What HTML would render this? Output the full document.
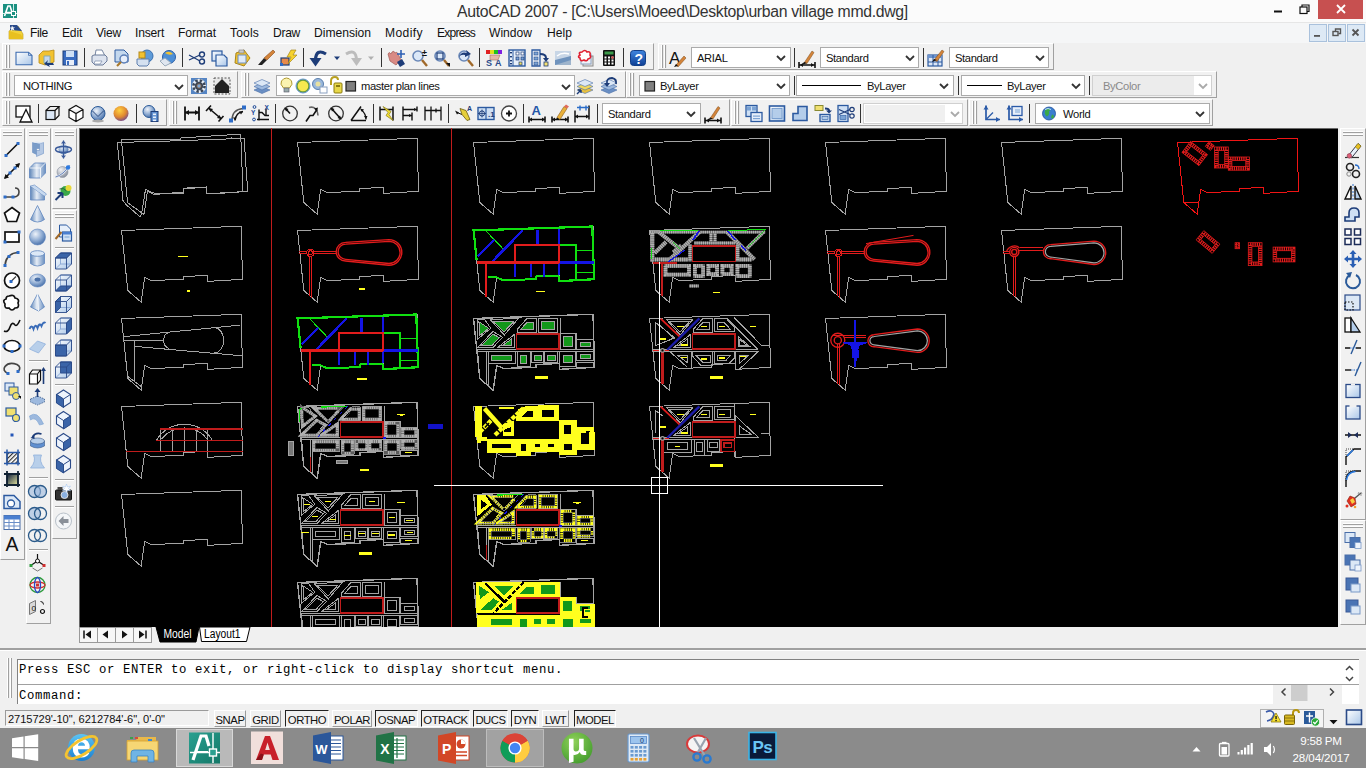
<!DOCTYPE html>
<html lang="en"><head><meta charset="utf-8"><title>AutoCAD 2007 - urban village mmd.dwg</title>
<style>

html,body{margin:0;padding:0}
body{width:1366px;height:768px;overflow:hidden;position:relative;background:#f0f0f0;font-family:"Liberation Sans",sans-serif;font-size:12px;color:#000}
.abs{position:absolute}
#title{position:absolute;left:0;top:0;width:1366px;height:22px;background:#fbfbfb}
#title .t{position:absolute;left:457px;top:2.5px;width:452px;font-size:15.8px;line-height:18px;white-space:nowrap;color:#333;letter-spacing:-0.34px}
#close{position:absolute;left:1318px;top:0;width:45px;height:19px;background:#c75050}
#menu{position:absolute;left:0;top:22px;width:1366px;height:21px;background:#f5f6f7;border-top:1px solid #e6e6e6;box-sizing:border-box}
#menu span{position:absolute;top:2px;font-size:12.1px;line-height:16px;white-space:nowrap;color:#111}
.mdi{position:absolute;top:24px;width:16px;height:16px;background:#dde9f5;border:1px solid #a9c1dc;box-sizing:content-box}
.tb{position:absolute;height:25px;background:#f1f1f1;border:1px solid;border-color:#fff #a0a0a0 #a0a0a0 #fff}
.grip{position:absolute;top:1px;width:1px;height:23px;background:#fff;border-right:1px solid #a0a0a0;box-shadow:1px 0 0 #e8e8e8}
.cb{position:absolute;height:19px;background:#fff;border:1px solid #ababab;box-sizing:content-box;font-size:11.2px;letter-spacing:-0.35px;line-height:20px;white-space:nowrap;overflow:hidden;color:#111}
.cb.dis{color:#8a8a8a;border-color:#d0d0d0}
.cb span{position:absolute;top:0}
.sep{position:absolute;width:1px;height:19px;background:#333}
.vtb{position:absolute;background:#f1f1f1;border:1px solid;border-color:#fff #a0a0a0 #a0a0a0 #fff}
.hgrip{position:absolute;left:2px;right:2px;height:1px;background:#fff;border-bottom:1px solid #a0a0a0}
.hsep{position:absolute;left:3px;right:3px;height:1px;background:#a0a0a0;border-bottom:1px solid #fff}
#dwg{position:absolute;left:79px;top:128px;width:1259px;height:499px;background:#000;border-top:1px solid #696969;border-left:1px solid #696969;box-sizing:border-box}
#tabs{position:absolute;left:80px;top:627px;height:15px}
.nav{position:absolute;top:627px;width:17px;height:14px;background:#f6f6f6;border:1px solid #9a9a9a;box-sizing:content-box}
#cmdsepline{position:absolute;left:0;top:648px;width:1366px;height:2px;background:#a0a0a0;border-bottom:1px solid #fff}
#cmd{position:absolute;left:17px;top:659px;width:1341px;height:44px;background:#fff;border-left:1px solid #828282;border-top:1px solid #828282;box-sizing:content-box}
#cmd .l{position:absolute;left:1px;font-family:"Liberation Mono",monospace;font-size:12.3px;line-height:14px;white-space:pre;color:#000;letter-spacing:0.62px}
#status{position:absolute;left:0;top:706px;width:1366px;height:22px;background:#f0f0f0}
.sb{position:absolute;top:710px;height:17px;font-size:11.3px;line-height:18px;text-align:center;white-space:nowrap;box-sizing:border-box;color:#111;letter-spacing:-0.45px}
.sb.up{border:1px solid;border-color:#fff #9a9a9a #9a9a9a #fff}
.sb.dn{border:1px solid;border-color:#222 #fff #fff #222}
#coords{position:absolute;left:5px;top:710px;width:204px;height:16px;border:1px solid;border-color:#9a9a9a #fff #fff #9a9a9a;font-size:11.1px;line-height:17px;white-space:nowrap;box-sizing:border-box;color:#111;letter-spacing:-0.06px}
#taskbar{position:absolute;left:0;top:728px;width:1366px;height:40px;background:#8b8b8b}
.tray{position:absolute;color:#fff;font-size:12px;white-space:nowrap;text-align:center}

</style></head>
<body>
<div id="title"><div class="t">AutoCAD 2007 - [C:\Users\Moeed\Desktop\urban village mmd.dwg]</div><div id="close"></div></div>
<div id="menu"><span style="left:30px;letter-spacing:-0.38px">File</span><span style="left:62px;letter-spacing:-0.20px">Edit</span><span style="left:96px;letter-spacing:-0.25px">View</span><span style="left:135px;letter-spacing:-0.20px">Insert</span><span style="left:178px;letter-spacing:-0.05px">Format</span><span style="left:230px;letter-spacing:0.16px">Tools</span><span style="left:273px;letter-spacing:-0.30px">Draw</span><span style="left:314px;letter-spacing:-0.01px">Dimension</span><span style="left:385px;letter-spacing:0.40px">Modify</span><span style="left:437px;letter-spacing:-0.81px">Express</span><span style="left:489px;letter-spacing:0.00px">Window</span><span style="left:547px;letter-spacing:0.03px">Help</span></div>
<div class="mdi" style="left:1309px"></div>
<div class="mdi" style="left:1328px"></div>
<div class="mdi" style="left:1347px"></div>
<div class="tb" style="left:2px;top:43px;width:650px"><i class="grip" style="left:2px"></i><i class="grip" style="left:5px"></i></div>
<div class="tb" style="left:658px;top:43px;width:394px"><i class="grip" style="left:2px"></i><i class="grip" style="left:5px"></i></div>
<div class="tb" style="left:2px;top:71px;width:234px"><i class="grip" style="left:2px"></i><i class="grip" style="left:5px"></i></div>
<div class="tb" style="left:241px;top:71px;width:383px"><i class="grip" style="left:2px"></i><i class="grip" style="left:5px"></i></div>
<div class="tb" style="left:626px;top:71px;width:589px"><i class="grip" style="left:2px"></i><i class="grip" style="left:5px"></i></div>
<div class="tb" style="left:2px;top:99px;width:163px"><i class="grip" style="left:2px"></i><i class="grip" style="left:5px"></i></div>
<div class="tb" style="left:169px;top:99px;width:559px"><i class="grip" style="left:2px"></i><i class="grip" style="left:5px"></i></div>
<div class="tb" style="left:731px;top:99px;width:235px"><i class="grip" style="left:2px"></i><i class="grip" style="left:5px"></i></div>
<div class="tb" style="left:969px;top:99px;width:242px"><i class="grip" style="left:2px"></i><i class="grip" style="left:5px"></i></div>
<i class="sep" style="left:84px;top:48px"></i>
<i class="sep" style="left:182px;top:48px"></i>
<i class="sep" style="left:303px;top:48px"></i>
<i class="sep" style="left:381px;top:48px"></i>
<i class="sep" style="left:479px;top:48px"></i>
<i class="sep" style="left:623px;top:48px"></i>
<i class="sep" style="left:794px;top:48px"></i>
<i class="sep" style="left:923px;top:48px"></i>
<i class="sep" style="left:794px;top:76px"></i>
<i class="sep" style="left:958px;top:76px"></i>
<i class="sep" style="left:1089px;top:76px"></i>
<i class="sep" style="left:38px;top:104px"></i>
<i class="sep" style="left:136px;top:104px"></i>
<i class="sep" style="left:275px;top:104px"></i>
<i class="sep" style="left:373px;top:104px"></i>
<i class="sep" style="left:448px;top:104px"></i>
<i class="sep" style="left:523px;top:104px"></i>
<i class="sep" style="left:597px;top:104px"></i>
<i class="sep" style="left:860px;top:104px"></i>
<i class="sep" style="left:1029px;top:104px"></i>
<div class="cb" style="left:691px;top:47px;width:98px"><span style="left:5px">ARIAL</span></div>
<div class="cb" style="left:820px;top:47px;width:97px"><span style="left:5px">Standard</span></div>
<div class="cb" style="left:949px;top:47px;width:98px"><span style="left:5px">Standard</span></div>
<div class="cb" style="left:14px;top:75px;width:172px"><span style="left:8px">NOTHING</span></div>
<div class="cb" style="left:276px;top:75px;width:297px"><span style="left:84px">master plan lines</span></div>
<div class="cb" style="left:639px;top:75px;width:149px"><span style="left:20px">ByLayer</span></div>
<div class="cb" style="left:796px;top:75px;width:156px"><span style="left:70px">ByLayer</span><i class="abs" style="left:5px;top:9px;width:59px;height:1px;background:#000"></i></div>
<div class="cb" style="left:961px;top:75px;width:122px"><span style="left:45px">ByLayer</span><i class="abs" style="left:5px;top:9px;width:35px;height:1px;background:#000"></i></div>
<div class="cb dis" style="background:linear-gradient(90deg,#ececec 0,#ececec 101px,#fff 101px);left:1092px;top:75px;width:118px"><span style="left:10px">ByColor</span></div>
<div class="cb" style="left:602px;top:103px;width:97px"><span style="left:5px">Standard</span></div>
<div class="cb dis" style="left:863px;top:103px;width:98px"><span style="left:5px"></span><i class="abs" style="left:1px;top:1px;width:80px;height:17px;background:#f0f0f0"></i></div>
<div class="cb" style="left:1035px;top:103px;width:173px"><span style="left:27px">World</span></div>
<div class="vtb" style="left:0px;top:128px;width:23px;height:430px"><i class="hgrip" style="top:2px"></i><i class="hgrip" style="top:5px"></i></div>
<div class="vtb" style="left:26px;top:128px;width:23px;height:494px"><i class="hgrip" style="top:2px"></i><i class="hgrip" style="top:5px"></i></div>
<div class="vtb" style="left:52px;top:128px;width:23px;height:79px"><i class="hgrip" style="top:2px"></i><i class="hgrip" style="top:5px"></i></div>
<div class="vtb" style="left:52px;top:210px;width:23px;height:327px"><i class="hgrip" style="top:2px"></i><i class="hgrip" style="top:5px"></i></div>
<i class="abs" style="left:29px;top:360px;width:19px;height:1px;background:#a0a0a0;box-shadow:0 1px 0 #fff"></i>
<i class="abs" style="left:29px;top:477px;width:19px;height:1px;background:#a0a0a0;box-shadow:0 1px 0 #fff"></i>
<i class="abs" style="left:29px;top:549px;width:19px;height:1px;background:#a0a0a0;box-shadow:0 1px 0 #fff"></i>
<i class="abs" style="left:55px;top:247px;width:19px;height:1px;background:#a0a0a0;box-shadow:0 1px 0 #fff"></i>
<i class="abs" style="left:55px;top:383.5px;width:19px;height:1px;background:#a0a0a0;box-shadow:0 1px 0 #fff"></i>
<i class="abs" style="left:55px;top:478.5px;width:19px;height:1px;background:#a0a0a0;box-shadow:0 1px 0 #fff"></i>
<i class="abs" style="left:55px;top:506px;width:19px;height:1px;background:#a0a0a0;box-shadow:0 1px 0 #fff"></i>
<div class="vtb" style="left:1340px;top:128px;width:24px;height:390px"><i class="hgrip" style="top:2px"></i><i class="hgrip" style="top:5px"></i></div>
<div class="vtb" style="left:1340px;top:520px;width:24px;height:103px"><i class="hgrip" style="top:2px"></i><i class="hgrip" style="top:5px"></i></div>
<div id="dwg"></div>
<div class="nav" style="left:79px"></div>
<div class="nav" style="left:97px"></div>
<div class="nav" style="left:115px"></div>
<div class="nav" style="left:133px"></div>
<div id="cmdsepline"></div>
<div id="cmd"><div class="l" style="top:3px">Press ESC or ENTER to exit, or right-click to display shortcut menu.</div><i class="abs" style="left:0;top:24px;width:1341px;height:1px;background:#a0a0a0"></i><i class="abs" style="left:1255px;top:25px;width:69px;height:19px;background:#f0f0f0"></i><div class="l" style="top:28.5px">Command:</div></div>
<div id="status"></div>
<div id="coords"><span style="position:absolute;left:2px;top:0">2715729'-10", 6212784'-6", 0'-0"</span></div>
<div class="sb up" style="left:214px;width:32px">SNAP</div>
<div class="sb up" style="left:250px;width:31px">GRID</div>
<div class="sb dn" style="left:285px;width:44px">ORTHO</div>
<div class="sb up" style="left:332px;width:40px">POLAR</div>
<div class="sb dn" style="left:375px;width:43px">OSNAP</div>
<div class="sb dn" style="left:421px;width:49px">OTRACK</div>
<div class="sb dn" style="left:473px;width:35px">DUCS</div>
<div class="sb dn" style="left:511px;width:28px">DYN</div>
<div class="sb up" style="left:542px;width:27px">LWT</div>
<div class="sb dn" style="left:574px;width:42px">MODEL</div>
<svg class="abs" style="left:80px;top:128px" width="1258" height="499" viewBox="80 128 1258 499" shape-rendering="crispEdges"><defs><pattern id="hatchv" width="1.7" height="60" patternUnits="userSpaceOnUse"><rect x="0" y="0" width="0.7" height="60" fill="#000" fill-opacity="0.75"/></pattern></defs><line x1="271.5" y1="128" x2="271.5" y2="627" stroke="#c01c1c" stroke-width="1" /><line x1="451.5" y1="128" x2="451.5" y2="627" stroke="#c01c1c" stroke-width="1" /><g transform="translate(297,138)"><polygon points="0.5,4.5 120,0.3 121.6,53.3 86.3,55.4 86.3,49.5 62.8,50.5 62.8,53.3 30.5,54.5 23.7,51.5 20.2,76.2 6.8,64.5" fill="none" stroke="#a4a4a4" stroke-width="1" /></g><g transform="translate(473,138)"><polygon points="0.5,4.5 120,0.3 121.6,53.3 86.3,55.4 86.3,49.5 62.8,50.5 62.8,53.3 30.5,54.5 23.7,51.5 20.2,76.2 6.8,64.5" fill="none" stroke="#a4a4a4" stroke-width="1" /></g><g transform="translate(649,138)"><polygon points="0.5,4.5 120,0.3 121.6,53.3 86.3,55.4 86.3,49.5 62.8,50.5 62.8,53.3 30.5,54.5 23.7,51.5 20.2,76.2 6.8,64.5" fill="none" stroke="#a4a4a4" stroke-width="1" /></g><g transform="translate(825,138)"><polygon points="0.5,4.5 120,0.3 121.6,53.3 86.3,55.4 86.3,49.5 62.8,50.5 62.8,53.3 30.5,54.5 23.7,51.5 20.2,76.2 6.8,64.5" fill="none" stroke="#a4a4a4" stroke-width="1" /></g><g transform="translate(1001,138)"><polygon points="0.5,4.5 120,0.3 121.6,53.3 86.3,55.4 86.3,49.5 62.8,50.5 62.8,53.3 30.5,54.5 23.7,51.5 20.2,76.2 6.8,64.5" fill="none" stroke="#a4a4a4" stroke-width="1" /></g><polygon points="121.4,139.4 180.9,139.1 180.9,138 240.7,134.1 243,191.5 214.9,193.9 206.1,193.9 206.1,187.4 183.8,188.6 183.8,193.3 153.4,194.2 147.5,190.9 144,214.4 127.6,202.7" fill="none" stroke="#a4a4a4" stroke-width="1" /><polygon points="117.3,142.3 151,141.7 231.3,138.8 231.3,138 244.2,138.2 244.8,148.7 247.7,191.5 214.9,193.3 206.1,193.3 206.1,187 195.5,187.4 183.8,188.2 183.8,192.6 155,193.6 145.5,189.5 141.5,214.5 139.9,216.7 126.4,205 122.9,200.3" fill="none" stroke="#a4a4a4" stroke-width="1" /><g transform="translate(121,226)"><polygon points="0.5,4.5 120,0.3 121.6,53.3 86.3,55.4 86.3,49.5 62.8,50.5 62.8,53.3 30.5,54.5 23.7,51.5 20.2,76.2 6.8,64.5" fill="none" stroke="#a4a4a4" stroke-width="1" /><rect x="57" y="29.5" width="10" height="1.3" fill="#ffff1e" stroke="none" stroke-width="1" /><rect x="66" y="64" width="3" height="2" fill="#ffff1e" stroke="none" stroke-width="1" /></g><g transform="translate(121,314)"><polygon points="0.5,4.5 120,0.3 121.6,53.3 86.3,55.4 86.3,49.5 62.8,50.5 62.8,53.3 30.5,54.5 23.7,51.5 20.2,76.2 6.8,64.5" fill="none" stroke="#a4a4a4" stroke-width="1" /><line x1="1.7" y1="22.7" x2="119.4" y2="11.1" stroke="#a4a4a4" stroke-width="1" /><line x1="13.6" y1="32.4" x2="121.4" y2="41.8" stroke="#a4a4a4" stroke-width="1" /><line x1="2.5" y1="26.6" x2="41.7" y2="26.6" stroke="#a4a4a4" stroke-width="1" /><line x1="13.6" y1="26.6" x2="13.6" y2="67" stroke="#a4a4a4" stroke-width="1" /><line x1="6.6" y1="62.3" x2="20.6" y2="72.9" stroke="#a4a4a4" stroke-width="1" /><path d="M48,18.2 A7.6,8.6 0 0 0 48,34.6" fill="none" stroke="#a4a4a4"/><path d="M93.3,13.7 A9.4,12.6 0 0 1 93.3,38.9" fill="none" stroke="#a4a4a4"/></g><g transform="translate(121,402)"><polygon points="0.5,4.5 120,0.3 121.6,53.3 86.3,55.4 86.3,49.5 62.8,50.5 62.8,53.3 30.5,54.5 23.7,51.5 20.2,76.2 6.8,64.5" fill="none" stroke="#a4a4a4" stroke-width="1" /><line x1="39.4" y1="26.8" x2="39.4" y2="49.4" stroke="#a4a4a4" stroke-width="1" /><line x1="51.7" y1="26.8" x2="51.7" y2="49.4" stroke="#a4a4a4" stroke-width="1" /><line x1="63.4" y1="26.8" x2="63.4" y2="49.4" stroke="#a4a4a4" stroke-width="1" /><line x1="75.1" y1="26.8" x2="75.1" y2="49.4" stroke="#a4a4a4" stroke-width="1" /><line x1="86.3" y1="26.8" x2="86.3" y2="49.4" stroke="#a4a4a4" stroke-width="1" /><path d="M35.3,38.6 A32.3,32.3 0 0 1 91.5,38.6" fill="none" stroke="#a4a4a4"/><path d="M40.6,37.1 A29,29 0 0 1 86.3,37.1" fill="none" stroke="#a4a4a4"/><line x1="39.4" y1="26.8" x2="122" y2="26.8" stroke="#c01c1c" stroke-width="1.4" /><line x1="35.3" y1="38.6" x2="122" y2="38.6" stroke="#c01c1c" stroke-width="1.4" /><line x1="5.4" y1="49.4" x2="122" y2="49.4" stroke="#c01c1c" stroke-width="1.4" /></g><g transform="translate(121,490)"><polygon points="0.5,4.5 120,0.3 121.6,53.3 86.3,55.4 86.3,49.5 62.8,50.5 62.8,53.3 30.5,54.5 23.7,51.5 20.2,76.2 6.8,64.5" fill="none" stroke="#a4a4a4" stroke-width="1" /></g><g transform="translate(297,226)"><polygon points="0.5,4.5 120,0.3 121.6,53.3 86.3,55.4 86.3,49.5 62.8,50.5 62.8,53.3 30.5,54.5 23.7,51.5 20.2,76.2 6.8,64.5" fill="none" stroke="#a4a4a4" stroke-width="1" /><line x1="2.2" y1="25.9" x2="41.5" y2="25.9" stroke="#e21c1c" stroke-width="1" /><line x1="2.2" y1="27.7" x2="41.5" y2="27.7" stroke="#e21c1c" stroke-width="1" /><circle cx="13.4" cy="26.8" r="3.6" fill="#000" stroke="#e21c1c"/><circle cx="13.4" cy="26.8" r="2" fill="none" stroke="#e21c1c"/><line x1="12.4" y1="30" x2="12.4" y2="70" stroke="#e21c1c" stroke-width="1" /><line x1="14.3" y1="30" x2="14.3" y2="71.5" stroke="#e21c1c" stroke-width="1" /><path d="M48.5,16.4 L92,13.6 A12.8,12.8 0 0 1 92,39.2 L48.5,35 A9.3,9.3 0 0 1 48.5,16.4Z" fill="#000" stroke="#e21c1c" stroke-width="1.35" shape-rendering="auto"/><path d="M48.7,18.1 L92,15.3 A11.1,11.1 0 0 1 92,37.5 L48.7,33.3 A7.6,7.6 0 0 1 48.7,18.1Z" fill="none" stroke="#e21c1c" stroke-width="1.35" shape-rendering="auto"/><rect x="62" y="62" width="6" height="1.5" fill="#ffff1e" stroke="none" stroke-width="1" /></g><g transform="translate(297,314)"><polygon points="0.5,4.5 120,0.3 121.6,53.3 86.3,55.4 86.3,49.5 62.8,50.5 62.8,53.3 30.5,54.5 23.7,51.5 20.2,76.2 6.8,64.5" fill="none" stroke="#a4a4a4" stroke-width="1" /><polyline points="3.6,33.8 0.6,4.4 119.3,0.5 121.1,53.2 86,55.2 86,49.5" fill="none" stroke="#10e010" stroke-width="2.2" /><polyline points="14.8,50.7 23.7,51.5 30.5,54.3 62.8,53.1 62.8,50.5 86,49.5" fill="none" stroke="#10e010" stroke-width="2" /><line x1="12.3" y1="4.4" x2="31" y2="23.8" stroke="#10e010" stroke-width="1" /><polyline points="85.7,19.4 103.2,19.4 103.2,53.2" fill="none" stroke="#10e010" stroke-width="2" /><line x1="103.2" y1="24.6" x2="120" y2="24.6" stroke="#10e010" stroke-width="1.4" /><line x1="103.2" y1="46.7" x2="121" y2="46.7" stroke="#10e010" stroke-width="1.4" /><line x1="49.7" y1="4.4" x2="19.8" y2="35" stroke="#1414e6" stroke-width="2.4" /><line x1="21" y1="13.9" x2="4.9" y2="30" stroke="#1414e6" stroke-width="2.4" /><line x1="64.6" y1="4.4" x2="64.6" y2="19.4" stroke="#1414e6" stroke-width="2.4" /><line x1="85.7" y1="2.7" x2="85.7" y2="19.4" stroke="#1414e6" stroke-width="2.2" /><line x1="42.2" y1="36.3" x2="42.2" y2="51.2" stroke="#1414e6" stroke-width="2.4" /><line x1="57.9" y1="36.3" x2="57.9" y2="51.2" stroke="#1414e6" stroke-width="2.4" /><line x1="70.8" y1="36.3" x2="70.8" y2="51.2" stroke="#1414e6" stroke-width="2.4" /><line x1="85.7" y1="36.3" x2="85.7" y2="49" stroke="#1414e6" stroke-width="2.2" /><line x1="85.7" y1="36.3" x2="121" y2="36.3" stroke="#1414e6" stroke-width="2.4" /><line x1="3.6" y1="36.3" x2="85.7" y2="36.3" stroke="#e21c1c" stroke-width="2.6" /><rect x="42.2" y="19.4" width="43.5" height="16.9" fill="none" stroke="#e21c1c" stroke-width="2" /><line x1="13.1" y1="36.3" x2="13.1" y2="71.1" stroke="#e21c1c" stroke-width="2.4" /><rect x="60" y="64" width="10" height="1.6" fill="#ffff1e" stroke="none" stroke-width="1" /></g><g transform="translate(297,402)"><polygon points="0.5,4.5 120,0.3 121.6,53.3 86.3,55.4 86.3,49.5 62.8,50.5 62.8,53.3 30.5,54.5 23.7,51.5 20.2,76.2 6.8,64.5" fill="none" stroke="#a4a4a4" stroke-width="1.4" /><polyline points="87.3,4.4 87.3,19 103,19 103,25.2 120.5,25.2" fill="none" stroke="#a4a4a4" stroke-width="1" /><polyline points="4.7,37.8 6.8,64.5" fill="none" stroke="#a4a4a4" stroke-width="1" /><line x1="13.5" y1="37.8" x2="13.5" y2="69" stroke="#a4a4a4" stroke-width="1" /><line x1="15.3" y1="49.8" x2="15.3" y2="72" stroke="#a4a4a4" stroke-width="1" /><line x1="3.5" y1="35.6" x2="120.7" y2="35.6" stroke="#a4a4a4" stroke-width="1" /><line x1="3.5" y1="37.6" x2="120.7" y2="37.6" stroke="#a4a4a4" stroke-width="1" /><polygon points="5.9,7.7 15.8,14.3 6.8,21.4" fill="none" stroke="#5c5c5c" stroke-width="6" stroke-linejoin="miter"/><polygon points="5.9,7.7 15.8,14.3 6.8,21.4" fill="none" stroke="#b0b0b0" stroke-width="6" stroke-dasharray="1.5 0.7" stroke-linejoin="miter" shape-rendering="geometricPrecision"/><polygon points="5.9,7.7 15.8,14.3 6.8,21.4" fill="#000" stroke="#555" stroke-width="0.6" /><polygon points="4.3,5.5 11.5,5.3 17.8,14.3 4.8,25" fill="none" stroke="#a4a4a4" stroke-width="0.8" /><polygon points="21.1,7.9 40.4,7.9 31.1,17.8" fill="none" stroke="#5c5c5c" stroke-width="6" stroke-linejoin="miter"/><polygon points="21.1,7.9 40.4,7.9 31.1,17.8" fill="none" stroke="#b0b0b0" stroke-width="6" stroke-dasharray="1.5 0.7" stroke-linejoin="miter" shape-rendering="geometricPrecision"/><polygon points="21.1,7.9 40.4,7.9 31.1,17.8" fill="#000" stroke="#555" stroke-width="0.6" /><polygon points="17,5.2 45,4.8 31.3,21" fill="none" stroke="#a4a4a4" stroke-width="0.8" /><polygon points="8.2,31.5 20,20.2 26.2,23.5 19,31.5" fill="none" stroke="#5c5c5c" stroke-width="6" stroke-linejoin="miter"/><polygon points="8.2,31.5 20,20.2 26.2,23.5 19,31.5" fill="none" stroke="#b0b0b0" stroke-width="6" stroke-dasharray="1.5 0.7" stroke-linejoin="miter" shape-rendering="geometricPrecision"/><polygon points="8.2,31.5 20,20.2 26.2,23.5 19,31.5" fill="#000" stroke="#555" stroke-width="0.6" /><polygon points="4.6,33.5 20,17.5 29.5,23.3 20,33.5" fill="none" stroke="#a4a4a4" stroke-width="0.8" /><polygon points="29.3,31.5 38.7,24.9 38.7,31.5" fill="none" stroke="#5c5c5c" stroke-width="6" stroke-linejoin="miter"/><polygon points="29.3,31.5 38.7,24.9 38.7,31.5" fill="none" stroke="#b0b0b0" stroke-width="6" stroke-dasharray="1.5 0.7" stroke-linejoin="miter" shape-rendering="geometricPrecision"/><polygon points="29.3,31.5 38.7,24.9 38.7,31.5" fill="#000" stroke="#555" stroke-width="0.6" /><polygon points="24.5,33.5 41.3,20.5 41.3,33.5" fill="none" stroke="#a4a4a4" stroke-width="0.8" /><polygon points="47.5,15.5 53.9,8.5 60.7,8.5 60.7,15.5" fill="none" stroke="#5c5c5c" stroke-width="6" stroke-linejoin="miter"/><polygon points="47.5,15.5 53.9,8.5 60.7,8.5 60.7,15.5" fill="none" stroke="#b0b0b0" stroke-width="6" stroke-dasharray="1.5 0.7" stroke-linejoin="miter" shape-rendering="geometricPrecision"/><polygon points="47.5,15.5 53.9,8.5 60.7,8.5 60.7,15.5" fill="#000" stroke="#555" stroke-width="0.6" /><polygon points="44.5,18 44.5,15 53.5,5 63,4.8 63,18" fill="none" stroke="#a4a4a4" stroke-width="0.8" /><polygon points="68.2,7.3 81.7,7.3 81.7,15.9 68.2,15.9" fill="none" stroke="#5c5c5c" stroke-width="6" stroke-linejoin="miter"/><polygon points="68.2,7.3 81.7,7.3 81.7,15.9 68.2,15.9" fill="none" stroke="#b0b0b0" stroke-width="6" stroke-dasharray="1.5 0.7" stroke-linejoin="miter" shape-rendering="geometricPrecision"/><polygon points="68.2,7.3 81.7,7.3 81.7,15.9 68.2,15.9" fill="#000" stroke="#555" stroke-width="0.6" /><polygon points="65.5,4.7 84.5,4.3 84.5,18 65.5,18" fill="none" stroke="#a4a4a4" stroke-width="0.8" /><polygon points="90.2,22.5 99,22.5 99,32.7 90.2,32.7" fill="none" stroke="#5c5c5c" stroke-width="6" stroke-linejoin="miter"/><polygon points="90.2,22.5 99,22.5 99,32.7 90.2,32.7" fill="none" stroke="#b0b0b0" stroke-width="6" stroke-dasharray="1.5 0.7" stroke-linejoin="miter" shape-rendering="geometricPrecision"/><polygon points="90.2,22.5 99,22.5 99,32.7 90.2,32.7" fill="#000" stroke="#555" stroke-width="0.6" /><polygon points="87.3,19 102.5,19 102.5,35.4 87.3,35.4" fill="none" stroke="#a4a4a4" stroke-width="0.8" /><polygon points="107.2,28.4 117.4,28.4 117.4,32.7 107.2,32.7" fill="none" stroke="#5c5c5c" stroke-width="6" stroke-linejoin="miter"/><polygon points="107.2,28.4 117.4,28.4 117.4,32.7 107.2,32.7" fill="none" stroke="#b0b0b0" stroke-width="6" stroke-dasharray="1.5 0.7" stroke-linejoin="miter" shape-rendering="geometricPrecision"/><polygon points="107.2,28.4 117.4,28.4 117.4,32.7 107.2,32.7" fill="#000" stroke="#555" stroke-width="0.6" /><polygon points="103.7,25.7 120.1,25.7 120.1,35.4 103.7,35.4" fill="none" stroke="#a4a4a4" stroke-width="0.8" /><polygon points="18.2,41.3 38.9,41.3 38.9,46.5 18.2,46.5" fill="none" stroke="#5c5c5c" stroke-width="6" stroke-linejoin="miter"/><polygon points="18.2,41.3 38.9,41.3 38.9,46.5 18.2,46.5" fill="none" stroke="#b0b0b0" stroke-width="6" stroke-dasharray="1.5 0.7" stroke-linejoin="miter" shape-rendering="geometricPrecision"/><polygon points="18.2,41.3 38.9,41.3 38.9,46.5 18.2,46.5" fill="#000" stroke="#555" stroke-width="0.6" /><polygon points="15.3,37.8 42.8,37.8 42.8,49.8 15.3,49.8" fill="none" stroke="#a4a4a4" stroke-width="0.8" /><polygon points="47.1,41.3 53.9,41.3 53.9,49.5 47.1,49.5" fill="none" stroke="#5c5c5c" stroke-width="6" stroke-linejoin="miter"/><polygon points="47.1,41.3 53.9,41.3 53.9,49.5 47.1,49.5" fill="none" stroke="#b0b0b0" stroke-width="6" stroke-dasharray="1.5 0.7" stroke-linejoin="miter" shape-rendering="geometricPrecision"/><polygon points="47.1,41.3 53.9,41.3 53.9,49.5 47.1,49.5" fill="#000" stroke="#555" stroke-width="0.6" /><polygon points="44.5,37.8 57.1,37.8 57.1,52.4 44.5,52.4" fill="none" stroke="#a4a4a4" stroke-width="0.8" /><polygon points="61.2,41 68,41 68,46 61.2,46" fill="none" stroke="#5c5c5c" stroke-width="6" stroke-linejoin="miter"/><polygon points="61.2,41 68,41 68,46 61.2,46" fill="none" stroke="#b0b0b0" stroke-width="6" stroke-dasharray="1.5 0.7" stroke-linejoin="miter" shape-rendering="geometricPrecision"/><polygon points="61.2,41 68,41 68,46 61.2,46" fill="#000" stroke="#555" stroke-width="0.6" /><polygon points="58.6,37.8 70.3,37.8 70.3,48.9 58.6,48.9" fill="none" stroke="#a4a4a4" stroke-width="0.8" /><polygon points="74.4,41 82,41 82,46 74.4,46" fill="none" stroke="#5c5c5c" stroke-width="6" stroke-linejoin="miter"/><polygon points="74.4,41 82,41 82,46 74.4,46" fill="none" stroke="#b0b0b0" stroke-width="6" stroke-dasharray="1.5 0.7" stroke-linejoin="miter" shape-rendering="geometricPrecision"/><polygon points="74.4,41 82,41 82,46 74.4,46" fill="#000" stroke="#555" stroke-width="0.6" /><polygon points="71.7,37.8 84.4,37.8 84.4,48.9 71.7,48.9" fill="none" stroke="#a4a4a4" stroke-width="0.8" /><polygon points="90.2,41.3 99.6,41.3 99.6,48.9 90.2,48.9" fill="none" stroke="#5c5c5c" stroke-width="6" stroke-linejoin="miter"/><polygon points="90.2,41.3 99.6,41.3 99.6,48.9 90.2,48.9" fill="none" stroke="#b0b0b0" stroke-width="6" stroke-dasharray="1.5 0.7" stroke-linejoin="miter" shape-rendering="geometricPrecision"/><polygon points="90.2,41.3 99.6,41.3 99.6,48.9 90.2,48.9" fill="#000" stroke="#555" stroke-width="0.6" /><polygon points="86.7,37.8 102.5,37.8 102.5,52 86.7,52" fill="none" stroke="#a4a4a4" stroke-width="0.8" /><polygon points="107.2,40.7 117.8,40.7 117.8,44.8 107.2,44.8" fill="none" stroke="#5c5c5c" stroke-width="6" stroke-linejoin="miter"/><polygon points="107.2,40.7 117.8,40.7 117.8,44.8 107.2,44.8" fill="none" stroke="#b0b0b0" stroke-width="6" stroke-dasharray="1.5 0.7" stroke-linejoin="miter" shape-rendering="geometricPrecision"/><polygon points="107.2,40.7 117.8,40.7 117.8,44.8 107.2,44.8" fill="#000" stroke="#555" stroke-width="0.6" /><polygon points="103.7,37.8 120.7,37.8 120.7,46.5 103.7,46.5" fill="none" stroke="#a4a4a4" stroke-width="0.8" /><rect x="43.4" y="20.2" width="42.7" height="15" fill="#000" stroke="#c01c1c" stroke-width="1.6" /><polygon points="103.1,48 120.7,48 120.7,53.6 103.1,53.6" fill="none" stroke="#a4a4a4" stroke-width="1" /><rect x="100" y="11.8" width="8" height="1" fill="#ffff1e" stroke="none" stroke-width="1" /><rect x="102.5" y="12.8" width="3" height="1.5" fill="#ffff1e" stroke="none" stroke-width="1" /><rect x="108" y="50.4" width="7" height="0.9" fill="#ffff1e" stroke="none" stroke-width="1" /><line x1="24" y1="5" x2="50" y2="4.6" stroke="#10e010" stroke-width="1.2" /><line x1="50.4" y1="4.4" x2="20.5" y2="35.4" stroke="#1414e6" stroke-width="1" stroke-dasharray="3 5"/><line x1="13.5" y1="55" x2="13.5" y2="70" stroke="#c01c1c" stroke-width="1.2" /><rect x="86" y="35" width="3" height="2" fill="#1414e6" stroke="none" stroke-width="1" /><polyline points="3,20 2,8 5,6" fill="none" stroke="#10e010" stroke-width="1" /><rect x="63" y="66.5" width="9" height="2.5" fill="#ffff1e" stroke="none" stroke-width="1" /><rect x="-9" y="39" width="5" height="14" fill="#777" stroke="#a4a4a4" stroke-width="1" /><rect x="39" y="58" width="11" height="3" fill="#777" stroke="#a4a4a4" stroke-width="1" /><rect x="131" y="22" width="15" height="4.5" fill="#1212c8" stroke="none" stroke-width="1" /></g><g transform="translate(297,490)"><polygon points="0.5,4.5 120,0.3 121.6,53.3 86.3,55.4 86.3,49.5 62.8,50.5 62.8,53.3 30.5,54.5 23.7,51.5 20.2,76.2 6.8,64.5" fill="none" stroke="#a4a4a4" stroke-width="1.4" /><polyline points="87.3,4.4 87.3,19 103,19 103,25.2 120.5,25.2" fill="none" stroke="#a4a4a4" stroke-width="1" /><polyline points="4.7,37.8 6.8,64.5" fill="none" stroke="#a4a4a4" stroke-width="1" /><line x1="13.5" y1="37.8" x2="13.5" y2="69" stroke="#a4a4a4" stroke-width="1" /><line x1="15.3" y1="49.8" x2="15.3" y2="72" stroke="#a4a4a4" stroke-width="1" /><line x1="3.5" y1="35.6" x2="120.7" y2="35.6" stroke="#a4a4a4" stroke-width="1" /><line x1="3.5" y1="37.6" x2="120.7" y2="37.6" stroke="#a4a4a4" stroke-width="1" /><polygon points="4.3,5.5 11.5,5.3 17.8,14.3 4.8,25" fill="none" stroke="#a4a4a4" stroke-width="1" /><polygon points="5.9,7.7 15.8,14.3 6.8,21.4" fill="none" stroke="#a4a4a4" stroke-width="1" /><polygon points="17,5.2 45,4.8 31.3,21" fill="none" stroke="#a4a4a4" stroke-width="1" /><polygon points="21.1,7.9 40.4,7.9 31.1,17.8" fill="none" stroke="#a4a4a4" stroke-width="1" /><polygon points="4.6,33.5 20,17.5 29.5,23.3 20,33.5" fill="none" stroke="#a4a4a4" stroke-width="1" /><polygon points="8.2,31.5 20,20.2 26.2,23.5 19,31.5" fill="none" stroke="#a4a4a4" stroke-width="1" /><polygon points="24.5,33.5 41.3,20.5 41.3,33.5" fill="none" stroke="#a4a4a4" stroke-width="1" /><polygon points="29.3,31.5 38.7,24.9 38.7,31.5" fill="none" stroke="#a4a4a4" stroke-width="1" /><polygon points="44.5,18 44.5,15 53.5,5 63,4.8 63,18" fill="none" stroke="#a4a4a4" stroke-width="1" /><polygon points="47.5,15.5 53.9,8.5 60.7,8.5 60.7,15.5" fill="none" stroke="#a4a4a4" stroke-width="1" /><polygon points="65.5,4.7 84.5,4.3 84.5,18 65.5,18" fill="none" stroke="#a4a4a4" stroke-width="1" /><polygon points="68.2,7.3 81.7,7.3 81.7,15.9 68.2,15.9" fill="none" stroke="#a4a4a4" stroke-width="1" /><polygon points="87.3,19 102.5,19 102.5,35.4 87.3,35.4" fill="none" stroke="#a4a4a4" stroke-width="1" /><polygon points="90.2,22.5 99,22.5 99,32.7 90.2,32.7" fill="none" stroke="#a4a4a4" stroke-width="1" /><polygon points="103.7,25.7 120.1,25.7 120.1,35.4 103.7,35.4" fill="none" stroke="#a4a4a4" stroke-width="1" /><polygon points="107.2,28.4 117.4,28.4 117.4,32.7 107.2,32.7" fill="none" stroke="#a4a4a4" stroke-width="1" /><polygon points="15.3,37.8 42.8,37.8 42.8,49.8 15.3,49.8" fill="none" stroke="#a4a4a4" stroke-width="1" /><polygon points="18.2,41.3 38.9,41.3 38.9,46.5 18.2,46.5" fill="none" stroke="#a4a4a4" stroke-width="1" /><polygon points="44.5,37.8 57.1,37.8 57.1,52.4 44.5,52.4" fill="none" stroke="#a4a4a4" stroke-width="1" /><polygon points="47.1,41.3 53.9,41.3 53.9,49.5 47.1,49.5" fill="none" stroke="#a4a4a4" stroke-width="1" /><polygon points="58.6,37.8 70.3,37.8 70.3,48.9 58.6,48.9" fill="none" stroke="#a4a4a4" stroke-width="1" /><polygon points="61.2,41 68,41 68,46 61.2,46" fill="none" stroke="#a4a4a4" stroke-width="1" /><polygon points="71.7,37.8 84.4,37.8 84.4,48.9 71.7,48.9" fill="none" stroke="#a4a4a4" stroke-width="1" /><polygon points="74.4,41 82,41 82,46 74.4,46" fill="none" stroke="#a4a4a4" stroke-width="1" /><polygon points="86.7,37.8 102.5,37.8 102.5,52 86.7,52" fill="none" stroke="#a4a4a4" stroke-width="1" /><polygon points="90.2,41.3 99.6,41.3 99.6,48.9 90.2,48.9" fill="none" stroke="#a4a4a4" stroke-width="1" /><polygon points="103.7,37.8 120.7,37.8 120.7,46.5 103.7,46.5" fill="none" stroke="#a4a4a4" stroke-width="1" /><polygon points="107.2,40.7 117.8,40.7 117.8,44.8 107.2,44.8" fill="none" stroke="#a4a4a4" stroke-width="1" /><polygon points="103.1,48 120.7,48 120.7,53.6 103.1,53.6" fill="none" stroke="#a4a4a4" stroke-width="1" /><rect x="43.4" y="20.2" width="42.7" height="15" fill="none" stroke="#c01c1c" stroke-width="1.6" /><rect x="6.5" y="14.0667" width="6" height="0.8" fill="#ffff1e" stroke="none" stroke-width="1" /><rect x="27.8667" y="10.8" width="6" height="0.8" fill="#ffff1e" stroke="none" stroke-width="1" /><rect x="15.35" y="26.275" width="6" height="0.8" fill="#ffff1e" stroke="none" stroke-width="1" /><rect x="32.5667" y="28.9" width="6" height="0.8" fill="#ffff1e" stroke="none" stroke-width="1" /><rect x="52.7" y="11.6" width="6" height="0.8" fill="#ffff1e" stroke="none" stroke-width="1" /><rect x="71.95" y="11.2" width="6" height="0.8" fill="#ffff1e" stroke="none" stroke-width="1" /><rect x="91.6" y="27.2" width="6" height="0.8" fill="#ffff1e" stroke="none" stroke-width="1" /><rect x="108.8" y="29.75" width="7" height="1.6" fill="#ffff1e" stroke="none" stroke-width="1" /><rect x="25.55" y="43.5" width="6" height="0.8" fill="#ffff1e" stroke="none" stroke-width="1" /><rect x="47" y="44.6" width="7" height="1.6" fill="#ffff1e" stroke="none" stroke-width="1" /><rect x="61.1" y="42.7" width="7" height="1.6" fill="#ffff1e" stroke="none" stroke-width="1" /><rect x="74.7" y="42.7" width="7" height="1.6" fill="#ffff1e" stroke="none" stroke-width="1" /><rect x="91.4" y="44.3" width="7" height="1.6" fill="#ffff1e" stroke="none" stroke-width="1" /><rect x="109.5" y="42.35" width="6" height="0.8" fill="#ffff1e" stroke="none" stroke-width="1" /><rect x="100" y="11.8" width="8" height="1" fill="#ffff1e" stroke="none" stroke-width="1" /><rect x="108" y="50.4" width="7" height="0.9" fill="#ffff1e" stroke="none" stroke-width="1" /><rect x="4" y="42" width="7.5" height="0.8" fill="#ffff1e" stroke="none" stroke-width="1" /><rect x="62.1" y="62" width="12.9" height="3" fill="#ffff1e" stroke="none" stroke-width="1" /></g><g transform="translate(297,578)"><polygon points="0.5,4.5 120,0.3 121.6,53.3 86.3,55.4 86.3,49.5 62.8,50.5 62.8,53.3 30.5,54.5 23.7,51.5 20.2,76.2 6.8,64.5" fill="none" stroke="#a4a4a4" stroke-width="1.4" /><polyline points="87.3,4.4 87.3,19 103,19 103,25.2 120.5,25.2" fill="none" stroke="#a4a4a4" stroke-width="1" /><polyline points="4.7,37.8 6.8,64.5" fill="none" stroke="#a4a4a4" stroke-width="1" /><line x1="13.5" y1="37.8" x2="13.5" y2="69" stroke="#a4a4a4" stroke-width="1" /><line x1="15.3" y1="49.8" x2="15.3" y2="72" stroke="#a4a4a4" stroke-width="1" /><line x1="3.5" y1="35.6" x2="120.7" y2="35.6" stroke="#a4a4a4" stroke-width="1" /><line x1="3.5" y1="37.6" x2="120.7" y2="37.6" stroke="#a4a4a4" stroke-width="1" /><polygon points="4.3,5.5 11.5,5.3 17.8,14.3 4.8,25" fill="none" stroke="#a4a4a4" stroke-width="1" /><polygon points="5.9,7.7 15.8,14.3 6.8,21.4" fill="none" stroke="#a4a4a4" stroke-width="1" /><polygon points="17,5.2 45,4.8 31.3,21" fill="none" stroke="#a4a4a4" stroke-width="1" /><polygon points="21.1,7.9 40.4,7.9 31.1,17.8" fill="none" stroke="#a4a4a4" stroke-width="1" /><polygon points="4.6,33.5 20,17.5 29.5,23.3 20,33.5" fill="none" stroke="#a4a4a4" stroke-width="1" /><polygon points="8.2,31.5 20,20.2 26.2,23.5 19,31.5" fill="none" stroke="#a4a4a4" stroke-width="1" /><polygon points="24.5,33.5 41.3,20.5 41.3,33.5" fill="none" stroke="#a4a4a4" stroke-width="1" /><polygon points="29.3,31.5 38.7,24.9 38.7,31.5" fill="none" stroke="#a4a4a4" stroke-width="1" /><polygon points="44.5,18 44.5,15 53.5,5 63,4.8 63,18" fill="none" stroke="#a4a4a4" stroke-width="1" /><polygon points="47.5,15.5 53.9,8.5 60.7,8.5 60.7,15.5" fill="none" stroke="#a4a4a4" stroke-width="1" /><polygon points="65.5,4.7 84.5,4.3 84.5,18 65.5,18" fill="none" stroke="#a4a4a4" stroke-width="1" /><polygon points="68.2,7.3 81.7,7.3 81.7,15.9 68.2,15.9" fill="none" stroke="#a4a4a4" stroke-width="1" /><polygon points="87.3,19 102.5,19 102.5,35.4 87.3,35.4" fill="none" stroke="#a4a4a4" stroke-width="1" /><polygon points="90.2,22.5 99,22.5 99,32.7 90.2,32.7" fill="none" stroke="#a4a4a4" stroke-width="1" /><polygon points="103.7,25.7 120.1,25.7 120.1,35.4 103.7,35.4" fill="none" stroke="#a4a4a4" stroke-width="1" /><polygon points="107.2,28.4 117.4,28.4 117.4,32.7 107.2,32.7" fill="none" stroke="#a4a4a4" stroke-width="1" /><polygon points="15.3,37.8 42.8,37.8 42.8,49.8 15.3,49.8" fill="none" stroke="#a4a4a4" stroke-width="1" /><polygon points="18.2,41.3 38.9,41.3 38.9,46.5 18.2,46.5" fill="none" stroke="#a4a4a4" stroke-width="1" /><polygon points="44.5,37.8 57.1,37.8 57.1,52.4 44.5,52.4" fill="none" stroke="#a4a4a4" stroke-width="1" /><polygon points="47.1,41.3 53.9,41.3 53.9,49.5 47.1,49.5" fill="none" stroke="#a4a4a4" stroke-width="1" /><polygon points="58.6,37.8 70.3,37.8 70.3,48.9 58.6,48.9" fill="none" stroke="#a4a4a4" stroke-width="1" /><polygon points="61.2,41 68,41 68,46 61.2,46" fill="none" stroke="#a4a4a4" stroke-width="1" /><polygon points="71.7,37.8 84.4,37.8 84.4,48.9 71.7,48.9" fill="none" stroke="#a4a4a4" stroke-width="1" /><polygon points="74.4,41 82,41 82,46 74.4,46" fill="none" stroke="#a4a4a4" stroke-width="1" /><polygon points="86.7,37.8 102.5,37.8 102.5,52 86.7,52" fill="none" stroke="#a4a4a4" stroke-width="1" /><polygon points="90.2,41.3 99.6,41.3 99.6,48.9 90.2,48.9" fill="none" stroke="#a4a4a4" stroke-width="1" /><polygon points="103.7,37.8 120.7,37.8 120.7,46.5 103.7,46.5" fill="none" stroke="#a4a4a4" stroke-width="1" /><polygon points="107.2,40.7 117.8,40.7 117.8,44.8 107.2,44.8" fill="none" stroke="#a4a4a4" stroke-width="1" /><polygon points="103.1,48 120.7,48 120.7,53.6 103.1,53.6" fill="none" stroke="#a4a4a4" stroke-width="1" /><rect x="43.4" y="20.2" width="42.7" height="15" fill="none" stroke="#c01c1c" stroke-width="1.6" /></g><g transform="translate(473,226)"><polygon points="0.5,4.5 120,0.3 121.6,53.3 86.3,55.4 86.3,49.5 62.8,50.5 62.8,53.3 30.5,54.5 23.7,51.5 20.2,76.2 6.8,64.5" fill="none" stroke="#a4a4a4" stroke-width="1" /><polyline points="3.6,33.8 0.6,4.4 119.3,0.5 121.1,53.2 86,55.2 86,49.5" fill="none" stroke="#10e010" stroke-width="2.2" /><polyline points="14.8,50.7 23.7,51.5 30.5,54.3 62.8,53.1 62.8,50.5 86,49.5" fill="none" stroke="#10e010" stroke-width="2" /><line x1="12.3" y1="4.4" x2="31" y2="23.8" stroke="#10e010" stroke-width="1" /><polyline points="85.7,19.4 103.2,19.4 103.2,53.2" fill="none" stroke="#10e010" stroke-width="2" /><line x1="103.2" y1="24.6" x2="120" y2="24.6" stroke="#10e010" stroke-width="1.4" /><line x1="103.2" y1="46.7" x2="121" y2="46.7" stroke="#10e010" stroke-width="1.4" /><line x1="49.7" y1="4.4" x2="19.8" y2="35" stroke="#1414e6" stroke-width="2.4" /><line x1="21" y1="13.9" x2="4.9" y2="30" stroke="#1414e6" stroke-width="2.4" /><line x1="64.6" y1="4.4" x2="64.6" y2="19.4" stroke="#1414e6" stroke-width="2.4" /><line x1="85.7" y1="2.7" x2="85.7" y2="19.4" stroke="#1414e6" stroke-width="2.2" /><line x1="42.2" y1="36.3" x2="42.2" y2="51.2" stroke="#1414e6" stroke-width="2.4" /><line x1="57.9" y1="36.3" x2="57.9" y2="51.2" stroke="#1414e6" stroke-width="2.4" /><line x1="70.8" y1="36.3" x2="70.8" y2="51.2" stroke="#1414e6" stroke-width="2.4" /><line x1="85.7" y1="36.3" x2="85.7" y2="49" stroke="#1414e6" stroke-width="2.2" /><line x1="85.7" y1="36.3" x2="121" y2="36.3" stroke="#1414e6" stroke-width="2.4" /><line x1="3.6" y1="36.3" x2="85.7" y2="36.3" stroke="#e21c1c" stroke-width="2.6" /><rect x="42.2" y="19.4" width="43.5" height="16.9" fill="none" stroke="#e21c1c" stroke-width="2" /><line x1="13.1" y1="36.3" x2="13.1" y2="71.1" stroke="#e21c1c" stroke-width="2.4" /><rect x="63" y="64.5" width="9" height="1.5" fill="#ffff1e" stroke="none" stroke-width="1" /></g><g transform="translate(473,314)"><polygon points="0.5,4.5 120,0.3 121.6,53.3 86.3,55.4 86.3,49.5 62.8,50.5 62.8,53.3 30.5,54.5 23.7,51.5 20.2,76.2 6.8,64.5" fill="none" stroke="#a4a4a4" stroke-width="1.4" /><polyline points="87.3,4.4 87.3,19 103,19 103,25.2 120.5,25.2" fill="none" stroke="#a4a4a4" stroke-width="1" /><polyline points="4.7,37.8 6.8,64.5" fill="none" stroke="#a4a4a4" stroke-width="1" /><line x1="13.5" y1="37.8" x2="13.5" y2="69" stroke="#a4a4a4" stroke-width="1" /><line x1="15.3" y1="49.8" x2="15.3" y2="72" stroke="#a4a4a4" stroke-width="1" /><line x1="3.5" y1="35.6" x2="120.7" y2="35.6" stroke="#a4a4a4" stroke-width="1" /><line x1="3.5" y1="37.6" x2="120.7" y2="37.6" stroke="#a4a4a4" stroke-width="1" /><polygon points="4.3,5.5 11.5,5.3 17.8,14.3 4.8,25" fill="none" stroke="#a4a4a4" stroke-width="1" /><polygon points="5.9,7.7 15.8,14.3 6.8,21.4" fill="#12981a" stroke="#a4a4a4" stroke-width="1" /><polygon points="17,5.2 45,4.8 31.3,21" fill="none" stroke="#a4a4a4" stroke-width="1" /><polygon points="21.1,7.9 40.4,7.9 31.1,17.8" fill="#12981a" stroke="#a4a4a4" stroke-width="1" /><polygon points="4.6,33.5 20,17.5 29.5,23.3 20,33.5" fill="none" stroke="#a4a4a4" stroke-width="1" /><polygon points="8.2,31.5 20,20.2 26.2,23.5 19,31.5" fill="#12981a" stroke="#a4a4a4" stroke-width="1" /><polygon points="24.5,33.5 41.3,20.5 41.3,33.5" fill="none" stroke="#a4a4a4" stroke-width="1" /><polygon points="29.3,31.5 38.7,24.9 38.7,31.5" fill="#12981a" stroke="#a4a4a4" stroke-width="1" /><polygon points="44.5,18 44.5,15 53.5,5 63,4.8 63,18" fill="none" stroke="#a4a4a4" stroke-width="1" /><polygon points="47.5,15.5 53.9,8.5 60.7,8.5 60.7,15.5" fill="#12981a" stroke="#a4a4a4" stroke-width="1" /><polygon points="65.5,4.7 84.5,4.3 84.5,18 65.5,18" fill="none" stroke="#a4a4a4" stroke-width="1" /><polygon points="68.2,7.3 81.7,7.3 81.7,15.9 68.2,15.9" fill="#12981a" stroke="#a4a4a4" stroke-width="1" /><polygon points="87.3,19 102.5,19 102.5,35.4 87.3,35.4" fill="none" stroke="#a4a4a4" stroke-width="1" /><polygon points="90.2,22.5 99,22.5 99,32.7 90.2,32.7" fill="#12981a" stroke="#a4a4a4" stroke-width="1" /><polygon points="103.7,25.7 120.1,25.7 120.1,35.4 103.7,35.4" fill="none" stroke="#a4a4a4" stroke-width="1" /><polygon points="107.2,28.4 117.4,28.4 117.4,32.7 107.2,32.7" fill="#12981a" stroke="#a4a4a4" stroke-width="1" /><polygon points="15.3,37.8 42.8,37.8 42.8,49.8 15.3,49.8" fill="none" stroke="#a4a4a4" stroke-width="1" /><polygon points="18.2,41.3 38.9,41.3 38.9,46.5 18.2,46.5" fill="#12981a" stroke="#a4a4a4" stroke-width="1" /><polygon points="44.5,37.8 57.1,37.8 57.1,52.4 44.5,52.4" fill="none" stroke="#a4a4a4" stroke-width="1" /><polygon points="47.1,41.3 53.9,41.3 53.9,49.5 47.1,49.5" fill="#12981a" stroke="#a4a4a4" stroke-width="1" /><polygon points="58.6,37.8 70.3,37.8 70.3,48.9 58.6,48.9" fill="none" stroke="#a4a4a4" stroke-width="1" /><polygon points="61.2,41 68,41 68,46 61.2,46" fill="#12981a" stroke="#a4a4a4" stroke-width="1" /><polygon points="71.7,37.8 84.4,37.8 84.4,48.9 71.7,48.9" fill="none" stroke="#a4a4a4" stroke-width="1" /><polygon points="74.4,41 82,41 82,46 74.4,46" fill="#12981a" stroke="#a4a4a4" stroke-width="1" /><polygon points="86.7,37.8 102.5,37.8 102.5,52 86.7,52" fill="none" stroke="#a4a4a4" stroke-width="1" /><polygon points="90.2,41.3 99.6,41.3 99.6,48.9 90.2,48.9" fill="#12981a" stroke="#a4a4a4" stroke-width="1" /><polygon points="103.7,37.8 120.7,37.8 120.7,46.5 103.7,46.5" fill="none" stroke="#a4a4a4" stroke-width="1" /><polygon points="107.2,40.7 117.8,40.7 117.8,44.8 107.2,44.8" fill="#12981a" stroke="#a4a4a4" stroke-width="1" /><polygon points="103.1,48 120.7,48 120.7,53.6 103.1,53.6" fill="none" stroke="#a4a4a4" stroke-width="1" /><rect x="43.4" y="20.2" width="42.7" height="15" fill="none" stroke="#c01c1c" stroke-width="1.6" /><rect x="62.1" y="62" width="12.9" height="3" fill="#ffff1e" stroke="none" stroke-width="1" /></g><g transform="translate(473,402)"><polygon points="0.5,4.5 120,0.3 121.6,53.3 86.3,55.4 86.3,49.5 62.8,50.5 62.8,53.3 30.5,54.5 23.7,51.5 20.2,76.2 6.8,64.5" fill="none" stroke="#a4a4a4" stroke-width="1" /><polygon points="44.5,18 44.5,15 53.5,5 63,4.8 63,18" fill="#ffff1e" stroke="#ffff1e" stroke-width="2.4" /><polygon points="47.5,15.5 53.9,8.5 60.7,8.5 60.7,15.5" fill="#000" stroke="#ffff1e" stroke-width="1.2" /><polygon points="65.5,4.7 84.5,4.3 84.5,18 65.5,18" fill="#ffff1e" stroke="#ffff1e" stroke-width="2.4" /><polygon points="68.2,7.3 81.7,7.3 81.7,15.9 68.2,15.9" fill="#000" stroke="#ffff1e" stroke-width="1.2" /><polygon points="87.3,19 102.5,19 102.5,35.4 87.3,35.4" fill="#ffff1e" stroke="#ffff1e" stroke-width="2.4" /><polygon points="90.2,22.5 99,22.5 99,32.7 90.2,32.7" fill="#000" stroke="#ffff1e" stroke-width="1.2" /><polygon points="103.7,25.7 120.1,25.7 120.1,35.4 103.7,35.4" fill="#ffff1e" stroke="#ffff1e" stroke-width="2.4" /><polygon points="107.2,28.4 117.4,28.4 117.4,32.7 107.2,32.7" fill="#000" stroke="#ffff1e" stroke-width="1.2" /><polygon points="15.3,37.8 42.8,37.8 42.8,49.8 15.3,49.8" fill="#ffff1e" stroke="#ffff1e" stroke-width="2.4" /><polygon points="18.2,41.3 38.9,41.3 38.9,46.5 18.2,46.5" fill="#000" stroke="#ffff1e" stroke-width="1.2" /><polygon points="44.5,37.8 57.1,37.8 57.1,52.4 44.5,52.4" fill="#ffff1e" stroke="#ffff1e" stroke-width="2.4" /><polygon points="47.1,41.3 53.9,41.3 53.9,49.5 47.1,49.5" fill="#000" stroke="#ffff1e" stroke-width="1.2" /><polygon points="58.6,37.8 70.3,37.8 70.3,48.9 58.6,48.9" fill="#ffff1e" stroke="#ffff1e" stroke-width="2.4" /><polygon points="61.2,41 68,41 68,46 61.2,46" fill="#000" stroke="#ffff1e" stroke-width="1.2" /><polygon points="71.7,37.8 84.4,37.8 84.4,48.9 71.7,48.9" fill="#ffff1e" stroke="#ffff1e" stroke-width="2.4" /><polygon points="74.4,41 82,41 82,46 74.4,46" fill="#000" stroke="#ffff1e" stroke-width="1.2" /><polygon points="86.7,37.8 102.5,37.8 102.5,52 86.7,52" fill="#ffff1e" stroke="#ffff1e" stroke-width="2.4" /><polygon points="90.2,41.3 99.6,41.3 99.6,48.9 90.2,48.9" fill="#000" stroke="#ffff1e" stroke-width="1.2" /><polygon points="103.7,37.8 120.7,37.8 120.7,46.5 103.7,46.5" fill="#ffff1e" stroke="#ffff1e" stroke-width="2.4" /><polygon points="107.2,40.7 117.8,40.7 117.8,44.8 107.2,44.8" fill="#000" stroke="#ffff1e" stroke-width="1.2" /><line x1="5.6" y1="3.8" x2="5.6" y2="34.8" stroke="#ffff1e" stroke-width="6.4" /><polygon points="8.5,9.5 15.5,14.5 8.5,21.5" fill="#000" stroke="none" stroke-width="1" /><line x1="11.5" y1="6.5" x2="29" y2="26" stroke="#ffff1e" stroke-width="4.6" shape-rendering="auto"/><line x1="50.5" y1="6" x2="22" y2="33" stroke="#ffff1e" stroke-width="4.2" stroke-dasharray="4.5 1.3" shape-rendering="auto"/><line x1="18" y1="18.5" x2="5" y2="32" stroke="#ffff1e" stroke-width="4.2" stroke-dasharray="4.5 1.3" shape-rendering="auto"/><line x1="16" y1="21" x2="12" y2="25.5" stroke="#000" stroke-width="1.6" shape-rendering="auto"/><polygon points="26,4.5 41,4.5 41,7 26,7" fill="#ffff1e" stroke="none" stroke-width="1" /><polygon points="45,7 51,5 52,8 46,11" fill="#ffff1e" stroke="none" stroke-width="1" /><polygon points="30,22 41,19 41,33.5 30,33.5" fill="#ffff1e" stroke="none" stroke-width="1" /><polygon points="31,28 38,25 38,30 31,30" fill="#000" stroke="none" stroke-width="1" /><polygon points="4,34.5 14,34.5 14,41 4,41" fill="#ffff1e" stroke="none" stroke-width="1" /><polygon points="8,39 14,39 14,41.5 8,41.5" fill="#000" stroke="none" stroke-width="1" /><polygon points="102,30 121.5,30 121.5,46.5 102,46.5" fill="#ffff1e" stroke="none" stroke-width="1" /><polygon points="108,29 116,29 116,41.5 108,41.5" fill="#000" stroke="none" stroke-width="1" /><polygon points="108,29 113,29 113,31 108,31" fill="#ffff1e" stroke="none" stroke-width="1" /></g><g transform="translate(473,490)"><polygon points="0.5,4.5 120,0.3 121.6,53.3 86.3,55.4 86.3,49.5 62.8,50.5 62.8,53.3 30.5,54.5 23.7,51.5 20.2,76.2 6.8,64.5" fill="none" stroke="#a4a4a4" stroke-width="1.4" /><polyline points="87.3,4.4 87.3,19 103,19 103,25.2 120.5,25.2" fill="none" stroke="#a4a4a4" stroke-width="1" /><polyline points="4.7,37.8 6.8,64.5" fill="none" stroke="#a4a4a4" stroke-width="1" /><line x1="13.5" y1="37.8" x2="13.5" y2="69" stroke="#a4a4a4" stroke-width="1" /><line x1="15.3" y1="49.8" x2="15.3" y2="72" stroke="#a4a4a4" stroke-width="1" /><line x1="3.5" y1="35.6" x2="120.7" y2="35.6" stroke="#a4a4a4" stroke-width="1" /><line x1="3.5" y1="37.6" x2="120.7" y2="37.6" stroke="#a4a4a4" stroke-width="1" /><polygon points="4.3,5.5 11.5,5.3 17.8,14.3 4.8,25" fill="#ffff1e" stroke="#ffff1e" stroke-width="1.5" /><polygon points="7.5,9.5 14.5,14.3 8,19.5" fill="#000" stroke="none" stroke-width="1" /><polygon points="21.1,7.9 40.4,7.9 31.1,17.8" fill="none" stroke="#ffff1e" stroke-width="6" stroke-dasharray="1.5 0.7" stroke-linejoin="miter" shape-rendering="geometricPrecision"/><polygon points="21.1,7.9 40.4,7.9 31.1,17.8" fill="#000" stroke="#777" stroke-width="0.6" /><polygon points="17,5.2 45,4.8 31.3,21" fill="none" stroke="#a4a4a4" stroke-width="0.8" /><polygon points="8.2,31.5 20,20.2 26.2,23.5 19,31.5" fill="none" stroke="#ffff1e" stroke-width="6" stroke-dasharray="1.5 0.7" stroke-linejoin="miter" shape-rendering="geometricPrecision"/><polygon points="8.2,31.5 20,20.2 26.2,23.5 19,31.5" fill="#000" stroke="#777" stroke-width="0.6" /><polygon points="4.6,33.5 20,17.5 29.5,23.3 20,33.5" fill="none" stroke="#a4a4a4" stroke-width="0.8" /><polygon points="29.3,31.5 38.7,24.9 38.7,31.5" fill="none" stroke="#ffff1e" stroke-width="6" stroke-dasharray="1.5 0.7" stroke-linejoin="miter" shape-rendering="geometricPrecision"/><polygon points="29.3,31.5 38.7,24.9 38.7,31.5" fill="#000" stroke="#777" stroke-width="0.6" /><polygon points="24.5,33.5 41.3,20.5 41.3,33.5" fill="none" stroke="#a4a4a4" stroke-width="0.8" /><polygon points="47.5,15.5 53.9,8.5 60.7,8.5 60.7,15.5" fill="none" stroke="#ffff1e" stroke-width="6" stroke-dasharray="1.5 0.7" stroke-linejoin="miter" shape-rendering="geometricPrecision"/><polygon points="47.5,15.5 53.9,8.5 60.7,8.5 60.7,15.5" fill="#000" stroke="#777" stroke-width="0.6" /><polygon points="44.5,18 44.5,15 53.5,5 63,4.8 63,18" fill="none" stroke="#a4a4a4" stroke-width="0.8" /><polygon points="68.2,7.3 81.7,7.3 81.7,15.9 68.2,15.9" fill="none" stroke="#ffff1e" stroke-width="6" stroke-dasharray="1.5 0.7" stroke-linejoin="miter" shape-rendering="geometricPrecision"/><polygon points="68.2,7.3 81.7,7.3 81.7,15.9 68.2,15.9" fill="#000" stroke="#777" stroke-width="0.6" /><polygon points="65.5,4.7 84.5,4.3 84.5,18 65.5,18" fill="none" stroke="#a4a4a4" stroke-width="0.8" /><polygon points="90.2,22.5 99,22.5 99,32.7 90.2,32.7" fill="none" stroke="#ffff1e" stroke-width="6" stroke-dasharray="1.5 0.7" stroke-linejoin="miter" shape-rendering="geometricPrecision"/><polygon points="90.2,22.5 99,22.5 99,32.7 90.2,32.7" fill="#000" stroke="#777" stroke-width="0.6" /><polygon points="87.3,19 102.5,19 102.5,35.4 87.3,35.4" fill="none" stroke="#a4a4a4" stroke-width="0.8" /><polygon points="107.2,28.4 117.4,28.4 117.4,32.7 107.2,32.7" fill="none" stroke="#ffff1e" stroke-width="6" stroke-dasharray="1.5 0.7" stroke-linejoin="miter" shape-rendering="geometricPrecision"/><polygon points="107.2,28.4 117.4,28.4 117.4,32.7 107.2,32.7" fill="#000" stroke="#777" stroke-width="0.6" /><polygon points="103.7,25.7 120.1,25.7 120.1,35.4 103.7,35.4" fill="none" stroke="#a4a4a4" stroke-width="0.8" /><polygon points="18.2,41.3 38.9,41.3 38.9,46.5 18.2,46.5" fill="none" stroke="#ffff1e" stroke-width="6" stroke-dasharray="1.5 0.7" stroke-linejoin="miter" shape-rendering="geometricPrecision"/><polygon points="18.2,41.3 38.9,41.3 38.9,46.5 18.2,46.5" fill="#000" stroke="#777" stroke-width="0.6" /><polygon points="15.3,37.8 42.8,37.8 42.8,49.8 15.3,49.8" fill="none" stroke="#a4a4a4" stroke-width="0.8" /><polygon points="47.1,41.3 53.9,41.3 53.9,49.5 47.1,49.5" fill="none" stroke="#ffff1e" stroke-width="6" stroke-dasharray="1.5 0.7" stroke-linejoin="miter" shape-rendering="geometricPrecision"/><polygon points="47.1,41.3 53.9,41.3 53.9,49.5 47.1,49.5" fill="#000" stroke="#777" stroke-width="0.6" /><polygon points="44.5,37.8 57.1,37.8 57.1,52.4 44.5,52.4" fill="none" stroke="#a4a4a4" stroke-width="0.8" /><polygon points="61.2,41 68,41 68,46 61.2,46" fill="none" stroke="#ffff1e" stroke-width="6" stroke-dasharray="1.5 0.7" stroke-linejoin="miter" shape-rendering="geometricPrecision"/><polygon points="61.2,41 68,41 68,46 61.2,46" fill="#000" stroke="#777" stroke-width="0.6" /><polygon points="58.6,37.8 70.3,37.8 70.3,48.9 58.6,48.9" fill="none" stroke="#a4a4a4" stroke-width="0.8" /><polygon points="74.4,41 82,41 82,46 74.4,46" fill="none" stroke="#ffff1e" stroke-width="6" stroke-dasharray="1.5 0.7" stroke-linejoin="miter" shape-rendering="geometricPrecision"/><polygon points="74.4,41 82,41 82,46 74.4,46" fill="#000" stroke="#777" stroke-width="0.6" /><polygon points="71.7,37.8 84.4,37.8 84.4,48.9 71.7,48.9" fill="none" stroke="#a4a4a4" stroke-width="0.8" /><polygon points="90.2,41.3 99.6,41.3 99.6,48.9 90.2,48.9" fill="none" stroke="#ffff1e" stroke-width="6" stroke-dasharray="1.5 0.7" stroke-linejoin="miter" shape-rendering="geometricPrecision"/><polygon points="90.2,41.3 99.6,41.3 99.6,48.9 90.2,48.9" fill="#000" stroke="#777" stroke-width="0.6" /><polygon points="86.7,37.8 102.5,37.8 102.5,52 86.7,52" fill="none" stroke="#a4a4a4" stroke-width="0.8" /><polygon points="107.2,40.7 117.8,40.7 117.8,44.8 107.2,44.8" fill="none" stroke="#ffff1e" stroke-width="6" stroke-dasharray="1.5 0.7" stroke-linejoin="miter" shape-rendering="geometricPrecision"/><polygon points="107.2,40.7 117.8,40.7 117.8,44.8 107.2,44.8" fill="#000" stroke="#777" stroke-width="0.6" /><polygon points="103.7,37.8 120.7,37.8 120.7,46.5 103.7,46.5" fill="none" stroke="#a4a4a4" stroke-width="0.8" /><rect x="43.4" y="20.2" width="42.7" height="15" fill="#000" stroke="#c01c1c" stroke-width="1.6" /><polygon points="103.1,48 120.7,48 120.7,53.6 103.1,53.6" fill="none" stroke="#a4a4a4" stroke-width="1" /><rect x="100" y="11.8" width="8" height="1" fill="#ffff1e" stroke="none" stroke-width="1" /><rect x="102.5" y="12.8" width="3" height="1.5" fill="#ffff1e" stroke="none" stroke-width="1" /><rect x="108" y="50.4" width="7" height="0.9" fill="#ffff1e" stroke="none" stroke-width="1" /><line x1="24" y1="5" x2="50" y2="4.6" stroke="#10e010" stroke-width="1.2" /><line x1="50.4" y1="4.4" x2="20.5" y2="35.4" stroke="#1414e6" stroke-width="1" stroke-dasharray="3 5"/><line x1="13.5" y1="55" x2="13.5" y2="70" stroke="#c01c1c" stroke-width="1.2" /><rect x="86" y="35" width="3" height="2" fill="#1414e6" stroke="none" stroke-width="1" /></g><g transform="translate(473,578)"><polygon points="0.5,4.5 120,0.3 121.6,53.3 86.3,55.4 86.3,49.5 62.8,50.5 62.8,53.3 30.5,54.5 23.7,51.5 20.2,76.2 6.8,64.5" fill="none" stroke="#a4a4a4" stroke-width="1.4" /><polyline points="87.3,4.4 87.3,19 103,19 103,25.2 120.5,25.2" fill="none" stroke="#a4a4a4" stroke-width="1" /><polygon points="2.5,4.5 86.5,4.3 86.5,19 44,19 44,35 2.5,35" fill="#ffff1e" stroke="none" stroke-width="1" /><polygon points="87,19 103,19 103,50 87,50" fill="#ffff1e" stroke="none" stroke-width="1" /><polygon points="103,25.5 121.5,25.5 121.5,50 103,50" fill="#ffff1e" stroke="none" stroke-width="1" /><polygon points="4,36.5 87,36.5 87,50 4,50" fill="#ffff1e" stroke="none" stroke-width="1" /><polygon points="5.9,7.7 15.8,14.3 6.8,21.4" fill="#12981a" stroke="none" stroke-width="1" /><polygon points="21.1,7.9 40.4,7.9 31.1,17.8" fill="#12981a" stroke="none" stroke-width="1" /><polygon points="8.2,31.5 20,20.2 26.2,23.5 19,31.5" fill="#12981a" stroke="none" stroke-width="1" /><polygon points="29.3,31.5 38.7,24.9 38.7,31.5" fill="#12981a" stroke="none" stroke-width="1" /><polygon points="47.5,15.5 53.9,8.5 60.7,8.5 60.7,15.5" fill="#12981a" stroke="none" stroke-width="1" /><polygon points="68.2,7.3 81.7,7.3 81.7,15.9 68.2,15.9" fill="#12981a" stroke="none" stroke-width="1" /><polygon points="90.2,22.5 99,22.5 99,32.7 90.2,32.7" fill="#12981a" stroke="none" stroke-width="1" /><polygon points="107.2,28.4 117.4,28.4 117.4,32.7 107.2,32.7" fill="#12981a" stroke="none" stroke-width="1" /><polygon points="18.2,41.3 38.9,41.3 38.9,46.5 18.2,46.5" fill="#12981a" stroke="none" stroke-width="1" /><polygon points="47.1,41.3 53.9,41.3 53.9,49.5 47.1,49.5" fill="#12981a" stroke="none" stroke-width="1" /><polygon points="61.2,41 68,41 68,46 61.2,46" fill="#12981a" stroke="none" stroke-width="1" /><polygon points="74.4,41 82,41 82,46 74.4,46" fill="#12981a" stroke="none" stroke-width="1" /><polygon points="90.2,41.3 99.6,41.3 99.6,48.9 90.2,48.9" fill="#12981a" stroke="none" stroke-width="1" /><polygon points="107.2,40.7 117.8,40.7 117.8,44.8 107.2,44.8" fill="#12981a" stroke="none" stroke-width="1" /><line x1="12.3" y1="5.3" x2="31.7" y2="24.3" stroke="#000" stroke-width="2.5" /><line x1="50.4" y1="4.4" x2="20.5" y2="35.4" stroke="#000" stroke-width="2.5" stroke-dasharray="4 2"/><rect x="43.4" y="20.2" width="42.7" height="15" fill="#000" stroke="#c01c1c" stroke-width="1.6" /><polygon points="109,29 115,29 115,40 109,40" fill="#000" stroke="none" stroke-width="1" /><polygon points="110.5,30.5 117,30.5 117,38 110.5,38" fill="#ffff1e" stroke="none" stroke-width="1" /><polygon points="111.5,32 117,32 117,34 111.5,34" fill="#12981a" stroke="none" stroke-width="1" /></g><g transform="translate(649,226)"><polygon points="0.5,4.5 120,0.3 121.6,53.3 86.3,55.4 86.3,49.5 62.8,50.5 62.8,53.3 30.5,54.5 23.7,51.5 20.2,76.2 6.8,64.5" fill="none" stroke="#a4a4a4" stroke-width="1" /><line x1="1" y1="6.1" x2="116.4" y2="6.1" stroke="#606060" stroke-width="2.8" shape-rendering="auto"/><line x1="1" y1="6.1" x2="116.4" y2="6.1" stroke="#b2b2b2" stroke-width="2.8" stroke-dasharray="1.4 0.7" shape-rendering="auto"/><line x1="3.3" y1="7" x2="3.3" y2="35.5" stroke="#606060" stroke-width="4" shape-rendering="auto"/><line x1="3.3" y1="7" x2="3.3" y2="35.5" stroke="#b2b2b2" stroke-width="4" stroke-dasharray="1.4 0.7" shape-rendering="auto"/><line x1="9.8" y1="6" x2="30.3" y2="22.5" stroke="#606060" stroke-width="4" shape-rendering="auto"/><line x1="9.8" y1="6" x2="30.3" y2="22.5" stroke="#b2b2b2" stroke-width="4" stroke-dasharray="1.4 0.7" shape-rendering="auto"/><line x1="50.5" y1="6" x2="19.3" y2="34.8" stroke="#606060" stroke-width="4" shape-rendering="auto"/><line x1="50.5" y1="6" x2="19.3" y2="34.8" stroke="#b2b2b2" stroke-width="4" stroke-dasharray="1.4 0.7" shape-rendering="auto"/><line x1="5.7" y1="27" x2="17" y2="16" stroke="#606060" stroke-width="4" shape-rendering="auto"/><line x1="5.7" y1="27" x2="17" y2="16" stroke="#b2b2b2" stroke-width="4" stroke-dasharray="1.4 0.7" shape-rendering="auto"/><line x1="24" y1="26" x2="32" y2="19" stroke="#606060" stroke-width="3" shape-rendering="auto"/><line x1="24" y1="26" x2="32" y2="19" stroke="#b2b2b2" stroke-width="3" stroke-dasharray="1.4 0.7" shape-rendering="auto"/><line x1="78.1" y1="6" x2="105.4" y2="33.4" stroke="#606060" stroke-width="4" shape-rendering="auto"/><line x1="78.1" y1="6" x2="105.4" y2="33.4" stroke="#b2b2b2" stroke-width="4" stroke-dasharray="1.4 0.7" shape-rendering="auto"/><line x1="114.5" y1="6" x2="97.9" y2="22.5" stroke="#606060" stroke-width="3.5" shape-rendering="auto"/><line x1="114.5" y1="6" x2="97.9" y2="22.5" stroke="#b2b2b2" stroke-width="3.5" stroke-dasharray="1.4 0.7" shape-rendering="auto"/><line x1="45.3" y1="17" x2="86.3" y2="17" stroke="#606060" stroke-width="2.8" shape-rendering="auto"/><line x1="45.3" y1="17" x2="86.3" y2="17" stroke="#b2b2b2" stroke-width="2.8" stroke-dasharray="1.4 0.7" shape-rendering="auto"/><line x1="62" y1="7.5" x2="62" y2="15.7" stroke="#606060" stroke-width="3" shape-rendering="auto"/><line x1="62" y1="7.5" x2="62" y2="15.7" stroke="#b2b2b2" stroke-width="3" stroke-dasharray="1.4 0.7" shape-rendering="auto"/><line x1="66" y1="7.5" x2="66" y2="15.7" stroke="#606060" stroke-width="3" shape-rendering="auto"/><line x1="66" y1="7.5" x2="66" y2="15.7" stroke="#b2b2b2" stroke-width="3" stroke-dasharray="1.4 0.7" shape-rendering="auto"/><line x1="41" y1="18.4" x2="41" y2="35.5" stroke="#606060" stroke-width="3.4" shape-rendering="auto"/><line x1="41" y1="18.4" x2="41" y2="35.5" stroke="#b2b2b2" stroke-width="3.4" stroke-dasharray="1.4 0.7" shape-rendering="auto"/><line x1="88.7" y1="18.4" x2="88.7" y2="35.5" stroke="#606060" stroke-width="3.4" shape-rendering="auto"/><line x1="88.7" y1="18.4" x2="88.7" y2="35.5" stroke="#b2b2b2" stroke-width="3.4" stroke-dasharray="1.4 0.7" shape-rendering="auto"/><line x1="5.7" y1="33.4" x2="39" y2="33.4" stroke="#606060" stroke-width="4" shape-rendering="auto"/><line x1="5.7" y1="33.4" x2="39" y2="33.4" stroke="#b2b2b2" stroke-width="4" stroke-dasharray="1.4 0.7" shape-rendering="auto"/><line x1="90.4" y1="33.4" x2="102.7" y2="33.4" stroke="#606060" stroke-width="4" shape-rendering="auto"/><line x1="90.4" y1="33.4" x2="102.7" y2="33.4" stroke="#b2b2b2" stroke-width="4" stroke-dasharray="1.4 0.7" shape-rendering="auto"/><rect x="16.5" y="39.9" width="23.499999999999996" height="8.7" fill="none" stroke="#606060" stroke-width="3.8" shape-rendering="auto"/><rect x="16.5" y="39.9" width="23.499999999999996" height="8.7" fill="none" stroke="#b2b2b2" stroke-width="3.8" stroke-dasharray="1.4 0.7" shape-rendering="auto"/><rect x="45.9" y="39.9" width="8.2" height="10.2" fill="none" stroke="#606060" stroke-width="3.8" shape-rendering="auto"/><rect x="45.9" y="39.9" width="8.2" height="10.2" fill="none" stroke="#b2b2b2" stroke-width="3.8" stroke-dasharray="1.4 0.7" shape-rendering="auto"/><rect x="59.4" y="39.9" width="8.7" height="8.2" fill="none" stroke="#606060" stroke-width="3.8" shape-rendering="auto"/><rect x="59.4" y="39.9" width="8.7" height="8.2" fill="none" stroke="#b2b2b2" stroke-width="3.8" stroke-dasharray="1.4 0.7" shape-rendering="auto"/><rect x="73.4" y="39.9" width="9.2" height="8.2" fill="none" stroke="#606060" stroke-width="3.8" shape-rendering="auto"/><rect x="73.4" y="39.9" width="9.2" height="8.2" fill="none" stroke="#b2b2b2" stroke-width="3.8" stroke-dasharray="1.4 0.7" shape-rendering="auto"/><rect x="88.4" y="39.9" width="12.400000000000002" height="10.2" fill="none" stroke="#606060" stroke-width="3.8" shape-rendering="auto"/><rect x="88.4" y="39.9" width="12.400000000000002" height="10.2" fill="none" stroke="#b2b2b2" stroke-width="3.8" stroke-dasharray="1.4 0.7" shape-rendering="auto"/><line x1="40.5" y1="59.9" x2="49.7" y2="59.9" stroke="#606060" stroke-width="3" shape-rendering="auto"/><line x1="40.5" y1="59.9" x2="49.7" y2="59.9" stroke="#b2b2b2" stroke-width="3" stroke-dasharray="1.4 0.7" shape-rendering="auto"/><line x1="11" y1="4.9" x2="49" y2="4.6" stroke="#10e010" stroke-width="1" /><line x1="79.5" y1="4.4" x2="117" y2="3.6" stroke="#10e010" stroke-width="1" /><line x1="2" y1="22" x2="2" y2="33" stroke="#10e010" stroke-width="1" /><line x1="116" y1="4.5" x2="99" y2="21" stroke="#10e010" stroke-width="0.8" /><line x1="24" y1="16" x2="31" y2="22.5" stroke="#10e010" stroke-width="0.8" /><line x1="50" y1="5" x2="44" y2="14" stroke="#1414e6" stroke-width="1.5" /><line x1="36" y1="24" x2="19" y2="36" stroke="#1414e6" stroke-width="1.2" /><line x1="79" y1="5" x2="86" y2="14" stroke="#1414e6" stroke-width="1.5" /><line x1="92" y1="19" x2="97" y2="25" stroke="#1414e6" stroke-width="1.2" /><rect x="43.3" y="20.2" width="43" height="15.3" fill="#000" stroke="#c01c1c" stroke-width="1.6" /><line x1="3.6" y1="36.8" x2="27.5" y2="36.8" stroke="#c01c1c" stroke-width="1.4" /><line x1="13.2" y1="36.8" x2="13.2" y2="69.6" stroke="#c01c1c" stroke-width="1.8" /><rect x="64" y="66" width="7" height="1.2" fill="#ffff1e" stroke="none" stroke-width="1" /></g><g transform="translate(649,314)"><polygon points="0.5,4.5 120,0.3 121.6,53.3 86.3,55.4 86.3,49.5 62.8,50.5 62.8,53.3 30.5,54.5 23.7,51.5 20.2,76.2 6.8,64.5" fill="none" stroke="#a4a4a4" stroke-width="1" /><line x1="3.5" y1="35.5" x2="109" y2="35.5" stroke="#a4a4a4" stroke-width="1" /><line x1="3.5" y1="37.7" x2="109" y2="37.7" stroke="#a4a4a4" stroke-width="1" /><polygon points="6.5,8.5 26,24 6.5,31.5" fill="none" stroke="#a4a4a4" stroke-width="1" /><polygon points="10.5,10.5 24.5,24 10.5,30.2" fill="none" stroke="#a4a4a4" stroke-width="1" /><polygon points="17.5,5.5 44,5.2 31.2,21" fill="none" stroke="#a4a4a4" stroke-width="1" /><polygon points="21.1,7.9 40.4,7.9 31.1,17.8" fill="none" stroke="#a4a4a4" stroke-width="1" /><polygon points="24.5,33.5 41.3,20.5 41.3,33.5" fill="none" stroke="#a4a4a4" stroke-width="1" /><polygon points="29.3,31.5 38.7,24.9 38.7,31.5" fill="none" stroke="#a4a4a4" stroke-width="1" /><polygon points="44.5,18 44.5,15 53.5,5 63,4.8 63,18" fill="none" stroke="#a4a4a4" stroke-width="1" /><polygon points="47.5,15.5 53.9,8.5 60.7,8.5 60.7,15.5" fill="none" stroke="#a4a4a4" stroke-width="1" /><polygon points="65.6,4.5 77.3,4.4 85.5,13.7 85.5,17.8 65.6,17.8" fill="none" stroke="#a4a4a4" stroke-width="1" /><polygon points="68.2,8.5 75,8.5 81.7,15.5 68.2,15.5" fill="none" stroke="#a4a4a4" stroke-width="1" /><polyline points="77.9,4.4 109,35.4" fill="none" stroke="#a4a4a4" stroke-width="1" /><polyline points="85,3.4 112.5,31.3 120.1,31.3" fill="none" stroke="#a4a4a4" stroke-width="1" /><polygon points="89.1,22.5 100.8,32.5 89.1,32.5" fill="none" stroke="#a4a4a4" stroke-width="1" /><polygon points="90.8,25.5 97.8,31.3 90.8,31.3" fill="none" stroke="#a4a4a4" stroke-width="1" /><polyline points="21.1,37.8 38,53" fill="none" stroke="#a4a4a4" stroke-width="1" /><line x1="42.2" y1="37.8" x2="42.2" y2="53.6" stroke="#a4a4a4" stroke-width="1" /><polygon points="28.7,41.3 38.7,41.3 38.7,48.9" fill="none" stroke="#a4a4a4" stroke-width="1" /><polygon points="43.4,37.8 63.3,37.8 63.3,51.2 51.6,51.2 43.4,41.9" fill="none" stroke="#a4a4a4" stroke-width="1" /><polygon points="46.9,41.3 61,41.3 61,48.3 53.9,48.3" fill="none" stroke="#a4a4a4" stroke-width="1" /><polygon points="65,37.8 85.5,37.8 85.5,44.2 79.7,49.5 65,49.5" fill="none" stroke="#a4a4a4" stroke-width="1" /><polygon points="68,41.3 81.4,41.3 77.3,46 68,46" fill="none" stroke="#a4a4a4" stroke-width="1" /><polygon points="86.7,37.8 109,37.8 90.2,55.3 86.7,55.3" fill="none" stroke="#a4a4a4" stroke-width="1" /><polygon points="90.2,41.3 99.6,41.3 90.2,49.5" fill="none" stroke="#a4a4a4" stroke-width="1" /><rect x="43.4" y="20.2" width="42.7" height="15" fill="none" stroke="#c01c1c" stroke-width="1.6" /><line x1="11.7" y1="4.6" x2="31.7" y2="23.7" stroke="#e21c1c" stroke-width="1.8" shape-rendering="auto"/><line x1="50.4" y1="4.4" x2="18.2" y2="36" stroke="#1c1ca8" stroke-width="2.4" shape-rendering="auto"/><line x1="3.5" y1="36.4" x2="20" y2="36.4" stroke="#e21c1c" stroke-width="1.7" /><line x1="13.5" y1="36.2" x2="13.5" y2="70" stroke="#c01c1c" stroke-width="2.2" /><circle cx="13.5" cy="36.4" r="1.8" fill="#000" stroke="#a4a4a4" stroke-width="1.25" shape-rendering="auto"/><rect x="10.6" y="24" width="6.4" height="1.7" fill="#ffff1e" stroke="none" stroke-width="1" /><rect x="28.1" y="12" width="6.5" height="0.9" fill="#ffff1e" stroke="none" stroke-width="1" /><rect x="52.2" y="12" width="5.8" height="0.9" fill="#ffff1e" stroke="none" stroke-width="1" /><rect x="69.7" y="12" width="6.5" height="0.9" fill="#ffff1e" stroke="none" stroke-width="1" /><rect x="100.8" y="12" width="6.4" height="0.9" fill="#ffff1e" stroke="none" stroke-width="1" /><rect x="31.7" y="29.9" width="7" height="1.6" fill="#ffff1e" stroke="none" stroke-width="1" /><rect x="31.7" y="42.8" width="6.4" height="1.4" fill="#ffff1e" stroke="none" stroke-width="1" /><rect x="52.2" y="44" width="5.8" height="2.3" fill="#ffff1e" stroke="none" stroke-width="1" /><rect x="69.7" y="43" width="6.5" height="2.4" fill="#ffff1e" stroke="none" stroke-width="1" /><rect x="90.8" y="41.6" width="5.9" height="1.4" fill="#ffff1e" stroke="none" stroke-width="1" /><rect x="61" y="62.3" width="13" height="3" fill="#ffff1e" stroke="none" stroke-width="1" /></g><g transform="translate(649,402)"><polygon points="0.5,4.5 120,0.3 121.6,53.3 86.3,55.4 86.3,49.5 62.8,50.5 62.8,53.3 30.5,54.5 23.7,51.5 20.2,76.2 6.8,64.5" fill="none" stroke="#a4a4a4" stroke-width="1" /><line x1="3.5" y1="35.5" x2="86" y2="35.5" stroke="#a4a4a4" stroke-width="1" /><line x1="3.5" y1="37.7" x2="86" y2="37.7" stroke="#a4a4a4" stroke-width="1" /><polyline points="6.5,31 6.5,8.5 14,14" fill="none" stroke="#a4a4a4" stroke-width="1" /><polygon points="17.5,5.5 44,5.2 31.2,21" fill="none" stroke="#a4a4a4" stroke-width="1" /><polygon points="21.1,7.9 40.4,7.9 31.1,17.8" fill="none" stroke="#a4a4a4" stroke-width="1" /><polygon points="24.5,33.5 41.3,20.5 41.3,33.5" fill="none" stroke="#a4a4a4" stroke-width="1" /><polygon points="29.3,31.5 38.7,24.9 38.7,31.5" fill="none" stroke="#a4a4a4" stroke-width="1" /><polygon points="44.5,18 44.5,15 53.5,5 63,4.8 63,18" fill="none" stroke="#a4a4a4" stroke-width="1" /><polygon points="47.5,15.5 53.9,8.5 60.7,8.5 60.7,15.5" fill="none" stroke="#a4a4a4" stroke-width="1" /><polygon points="65.6,4.5 85,4.5 85,17.8 65.6,17.8" fill="none" stroke="#a4a4a4" stroke-width="1" /><polygon points="68.6,7.9 81.8,7.9 81.8,15.9 68.6,15.9" fill="none" stroke="#a4a4a4" stroke-width="1" /><line x1="85.5" y1="0.8" x2="85.5" y2="55.2" stroke="#a4a4a4" stroke-width="1" /><polygon points="86.8,14.1 109.2,35.3 86.8,35.3" fill="none" stroke="#a4a4a4" stroke-width="1" /><polygon points="90.5,24.1 103,32.8 90.5,32.8" fill="none" stroke="#a4a4a4" stroke-width="1" /><line x1="111.7" y1="31.6" x2="119.6" y2="31.6" stroke="#a4a4a4" stroke-width="1" /><polygon points="14.6,37.8 42,37.8 42,50.2 14.6,50.2" fill="none" stroke="#a4a4a4" stroke-width="1" /><polygon points="18.3,40.8 38.7,40.8 38.7,47.7 18.3,47.7" fill="none" stroke="#a4a4a4" stroke-width="1" /><polygon points="45.2,37.8 55.7,37.8 55.7,53.2 45.2,53.2" fill="none" stroke="#a4a4a4" stroke-width="1" /><polygon points="47,40.8 53.7,40.8 53.7,49 47,49" fill="none" stroke="#a4a4a4" stroke-width="1" /><polygon points="58.7,37.8 70.1,37.8 70.1,49 58.7,49" fill="none" stroke="#a4a4a4" stroke-width="1" /><polygon points="60.6,40.8 68.1,40.8 68.1,45.7 60.6,45.7" fill="none" stroke="#a4a4a4" stroke-width="1" /><polygon points="71.8,37.8 85.5,37.8 85.5,49.7 71.8,49.7" fill="none" stroke="#c01c1c" stroke-width="1.4" /><polygon points="75,40.8 82.5,40.8 82.5,45.7 75,45.7" fill="none" stroke="#c01c1c" stroke-width="1.4" /><rect x="43.4" y="20.2" width="42.7" height="15" fill="none" stroke="#c01c1c" stroke-width="1.6" /><line x1="11.7" y1="4.6" x2="31.7" y2="23.7" stroke="#e21c1c" stroke-width="1.8" shape-rendering="auto"/><line x1="50.4" y1="4.4" x2="18.2" y2="36" stroke="#1c1ca8" stroke-width="2.4" shape-rendering="auto"/><line x1="3.5" y1="36.4" x2="20" y2="36.4" stroke="#e21c1c" stroke-width="1.7" /><line x1="13.5" y1="36.2" x2="13.5" y2="70" stroke="#c01c1c" stroke-width="2.2" /><circle cx="13.5" cy="36.4" r="1.8" fill="#000" stroke="#a4a4a4" stroke-width="1.25" shape-rendering="auto"/><rect x="10.6" y="24" width="6.4" height="1.7" fill="#ffff1e" stroke="none" stroke-width="1" /><rect x="28.1" y="12" width="6.5" height="0.9" fill="#ffff1e" stroke="none" stroke-width="1" /><rect x="52.2" y="12" width="5.8" height="0.9" fill="#ffff1e" stroke="none" stroke-width="1" /><rect x="69.7" y="12" width="6.5" height="0.9" fill="#ffff1e" stroke="none" stroke-width="1" /><rect x="100.8" y="12" width="6.4" height="0.9" fill="#ffff1e" stroke="none" stroke-width="1" /><rect x="31.7" y="29.9" width="7" height="1.6" fill="#ffff1e" stroke="none" stroke-width="1" /><rect x="26" y="43.8" width="5" height="0.8" fill="#ffff1e" stroke="none" stroke-width="1" /><rect x="48" y="43.5" width="4" height="0.8" fill="#ffff1e" stroke="none" stroke-width="1" /><rect x="61" y="62.3" width="13" height="3" fill="#ffff1e" stroke="none" stroke-width="1" /></g><g transform="translate(825,226)"><polygon points="0.5,4.5 120,0.3 121.6,53.3 86.3,55.4 86.3,49.5 62.8,50.5 62.8,53.3 30.5,54.5 23.7,51.5 20.2,76.2 6.8,64.5" fill="none" stroke="#a4a4a4" stroke-width="1" /><line x1="2.2" y1="25.9" x2="41.5" y2="25.9" stroke="#e21c1c" stroke-width="1" /><line x1="2.2" y1="27.7" x2="41.5" y2="27.7" stroke="#e21c1c" stroke-width="1" /><circle cx="13.4" cy="26.8" r="3.6" fill="#000" stroke="#e21c1c"/><circle cx="13.4" cy="26.8" r="2" fill="none" stroke="#e21c1c"/><line x1="12.4" y1="30" x2="12.4" y2="70" stroke="#e21c1c" stroke-width="1" /><line x1="14.3" y1="30" x2="14.3" y2="71.5" stroke="#e21c1c" stroke-width="1" /><path d="M48.5,16.4 L92,13.6 A12.8,12.8 0 0 1 92,39.2 L48.5,35 A9.3,9.3 0 0 1 48.5,16.4Z" fill="#000" stroke="#e21c1c" stroke-width="1.35" shape-rendering="auto"/><path d="M48.7,18.1 L92,15.3 A11.1,11.1 0 0 1 92,37.5 L48.7,33.3 A7.6,7.6 0 0 1 48.7,18.1Z" fill="none" stroke="#e21c1c" stroke-width="1.35" shape-rendering="auto"/><line x1="41" y1="17.6" x2="88.5" y2="9.4" stroke="#e21c1c" stroke-width="1" shape-rendering="auto"/></g><g transform="translate(825,314)"><polygon points="0.5,4.5 120,0.3 121.6,53.3 86.3,55.4 86.3,49.5 62.8,50.5 62.8,53.3 30.5,54.5 23.7,51.5 20.2,76.2 6.8,64.5" fill="none" stroke="#a4a4a4" stroke-width="1" /><circle cx="12.8" cy="26.2" r="7" fill="none" stroke="#e21c1c" stroke-width="1.35" shape-rendering="auto"/><circle cx="12.8" cy="26.2" r="3.6" fill="none" stroke="#e21c1c" stroke-width="1.35" shape-rendering="auto"/><line x1="8" y1="21.2" x2="41.4" y2="21.2" stroke="#e21c1c" stroke-width="1" /><line x1="19" y1="23" x2="41.4" y2="23" stroke="#e21c1c" stroke-width="1" /><line x1="12.4" y1="30" x2="12.4" y2="70" stroke="#e21c1c" stroke-width="1" /><line x1="14.6" y1="30" x2="14.6" y2="71" stroke="#e21c1c" stroke-width="1" /><path d="M48.9,20.7 L92.5,15 A11.7,11.7 0 0 1 92.5,38.4 L48.9,32.7 A6,6 0 0 1 48.9,20.7Z" fill="none" stroke="#e21c1c" stroke-width="1.35" shape-rendering="auto"/><path d="M49.1,22.5 L92.5,16.8 A9.9,9.9 0 0 1 92.5,36.6 L49.1,30.9 A4.2,4.2 0 0 1 49.1,22.5Z" fill="none" stroke="#a4a4a4" stroke-width="1.25" shape-rendering="auto"/><line x1="30.2" y1="5.5" x2="30.2" y2="52.8" stroke="#1414e6" stroke-width="2.2" /><polygon points="17,27.5 43,27.5 40,30 35,31 33.5,35.5 33.5,44 31.5,44 31.5,47 28.8,47 28.8,44 26.8,44 26.8,35.5 25,31 20,30" fill="#1414e6" stroke="none" stroke-width="1" /></g><g transform="translate(1001,226)"><polygon points="0.5,4.5 120,0.3 121.6,53.3 86.3,55.4 86.3,49.5 62.8,50.5 62.8,53.3 30.5,54.5 23.7,51.5 20.2,76.2 6.8,64.5" fill="none" stroke="#a4a4a4" stroke-width="1" /><path d="M5.5,25.9 A8,8 0 0 1 18.5,21.9" fill="none" stroke="#e21c1c" stroke-width="1.35" shape-rendering="auto"/><circle cx="13.3" cy="25.9" r="4.6" fill="none" stroke="#e21c1c" stroke-width="1.35" shape-rendering="auto"/><circle cx="13.3" cy="25.9" r="2.6" fill="none" stroke="#e21c1c" stroke-width="1.35" shape-rendering="auto"/><line x1="2" y1="25" x2="9" y2="25" stroke="#e21c1c" stroke-width="1" /><line x1="2" y1="27" x2="9" y2="27" stroke="#e21c1c" stroke-width="1" /><line x1="18.5" y1="21.9" x2="42.3" y2="21.9" stroke="#e21c1c" stroke-width="1" /><line x1="17.5" y1="24" x2="42.3" y2="24" stroke="#e21c1c" stroke-width="1" /><line x1="12" y1="31" x2="12" y2="69.5" stroke="#e21c1c" stroke-width="1" /><line x1="14.4" y1="31" x2="14.4" y2="71" stroke="#e21c1c" stroke-width="1" /><path d="M49.5,18.6 L93,15.1 A11.7,11.7 0 0 1 93,38.5 L49.5,32.7 A7,7 0 0 1 49.5,18.6Z" fill="none" stroke="#e21c1c" stroke-width="1.35" shape-rendering="auto"/><path d="M49.7,20.3 L93,16.8 A10,10 0 0 1 93,36.8 L49.7,31 A5.3,5.3 0 0 1 49.7,20.3Z" fill="none" stroke="#a4a4a4" stroke-width="1.25" shape-rendering="auto"/></g><g transform="translate(1177,138)"><polygon points="0.5,4.5 120,0.3 121.6,53.3 86.3,55.4 86.3,49.5 62.8,50.5 62.8,53.3 30.5,54.5 23.7,51.5 20.2,76.2 6.8,64.5" fill="none" stroke="#f01414" stroke-width="1" /><line x1="6.8" y1="64.5" x2="21.8" y2="64" stroke="#f01414" stroke-width="1" /></g><g transform="rotate(38 1194.75 153.5)" shape-rendering="auto"><rect x="1185.7" y="148.2" width="18.1" height="10.6" fill="none" stroke="#e21c1c" stroke-width="3.4" stroke-dasharray="1.3 0.9"/><rect x="1184" y="146.5" width="21.5" height="14" fill="none" stroke="#e21c1c" stroke-width="0.8"/><rect x="1187.4" y="149.9" width="14.7" height="7.2" fill="none" stroke="#e21c1c" stroke-width="0.8"/></g><g transform="rotate(38 1209.75 146)" shape-rendering="auto"><rect x="1207.5" y="144" width="4.5" height="4" fill="none" stroke="#e21c1c" stroke-width="2" stroke-dasharray="1.3 0.9"/><rect x="1206.5" y="143" width="6.5" height="6" fill="none" stroke="#e21c1c" stroke-width="0.8"/><rect x="1208.5" y="145" width="2.5" height="2" fill="none" stroke="#e21c1c" stroke-width="0.8"/></g><g shape-rendering="auto"><rect x="1216.4" y="148.8" width="10.1" height="17.4" fill="none" stroke="#e21c1c" stroke-width="3.6" stroke-dasharray="1.3 0.9"/><rect x="1214.6" y="147" width="13.7" height="21" fill="none" stroke="#e21c1c" stroke-width="0.8"/><rect x="1218.2" y="150.6" width="6.5" height="13.8" fill="none" stroke="#e21c1c" stroke-width="0.8"/></g><g shape-rendering="auto"><rect x="1230.1" y="158.8" width="17.5" height="9.6" fill="none" stroke="#e21c1c" stroke-width="3.6" stroke-dasharray="1.3 0.9"/><rect x="1228.3" y="157" width="21.1" height="13.2" fill="none" stroke="#e21c1c" stroke-width="0.8"/><rect x="1231.9" y="160.6" width="13.9" height="6" fill="none" stroke="#e21c1c" stroke-width="0.8"/></g><g transform="rotate(40 1208 242)" shape-rendering="auto"><rect x="1199.2" y="237.7" width="17.6" height="8.6" fill="none" stroke="#e21c1c" stroke-width="3.4" stroke-dasharray="1.3 0.9"/><rect x="1197.5" y="236" width="21" height="12" fill="none" stroke="#e21c1c" stroke-width="0.8"/><rect x="1200.9" y="239.4" width="14.2" height="5.2" fill="none" stroke="#e21c1c" stroke-width="0.8"/></g><g shape-rendering="auto"><rect x="1235.85" y="243.45" width="3" height="4.5" fill="none" stroke="#e21c1c" stroke-width="1.5" stroke-dasharray="1.3 0.9"/><rect x="1235.1" y="242.7" width="4.5" height="6" fill="none" stroke="#e21c1c" stroke-width="0.8"/><rect x="1236.6" y="244.2" width="1.5" height="3" fill="none" stroke="#e21c1c" stroke-width="0.8"/></g><g shape-rendering="auto"><rect x="1250.1" y="244.5" width="10.1" height="19.3" fill="none" stroke="#e21c1c" stroke-width="3.6" stroke-dasharray="1.3 0.9"/><rect x="1248.3" y="242.7" width="13.7" height="22.9" fill="none" stroke="#e21c1c" stroke-width="0.8"/><rect x="1251.9" y="246.3" width="6.5" height="15.7" fill="none" stroke="#e21c1c" stroke-width="0.8"/></g><g shape-rendering="auto"><rect x="1274.9" y="248.9" width="18.3" height="11.2" fill="none" stroke="#e21c1c" stroke-width="3.6" stroke-dasharray="1.3 0.9"/><rect x="1273.1" y="247.1" width="21.9" height="14.8" fill="none" stroke="#e21c1c" stroke-width="0.8"/><rect x="1276.7" y="250.7" width="14.7" height="7.6" fill="none" stroke="#e21c1c" stroke-width="0.8"/></g><line x1="659.5" y1="262" x2="659.5" y2="627" stroke="#fff" stroke-width="1" /><line x1="434" y1="485.5" x2="883" y2="485.5" stroke="#fff" stroke-width="1" /><rect x="651.5" y="477.5" width="16" height="16" fill="#000" stroke="#fff" stroke-width="1" /><line x1="659.5" y1="477" x2="659.5" y2="494" stroke="#fff" stroke-width="1" /><line x1="651" y1="485.5" x2="668" y2="485.5" stroke="#fff" stroke-width="1" /></svg>
<svg class="abs" style="left:0;top:0" width="1366" height="728" viewBox="0 0 1366 728"><defs>
<linearGradient id="gPage" x1="0" y1="0" x2="1" y2="1"><stop offset="0" stop-color="#fff"/><stop offset="1" stop-color="#a9c6e8"/></linearGradient>
<linearGradient id="gHelp" x1="0" y1="0" x2="0" y2="1"><stop offset="0" stop-color="#3f86e0"/><stop offset="1" stop-color="#0f3f94"/></linearGradient>
<linearGradient id="gSolid" x1="0" y1="0" x2="1" y2="0"><stop offset="0" stop-color="#5f86b8"/><stop offset="0.45" stop-color="#e6edf6"/><stop offset="1" stop-color="#6a8fc0"/></linearGradient>
<radialGradient id="gSph" cx="0.38" cy="0.32" r="0.75"><stop offset="0" stop-color="#eef3fa"/><stop offset="0.55" stop-color="#8eabd2"/><stop offset="1" stop-color="#3f68a4"/></radialGradient>
<radialGradient id="gOrb" cx="0.4" cy="0.3" r="0.8"><stop offset="0" stop-color="#ffd040"/><stop offset="0.55" stop-color="#e08830"/><stop offset="1" stop-color="#5a3aa0"/></radialGradient>
<radialGradient id="gGray" cx="0.35" cy="0.3" r="0.8"><stop offset="0" stop-color="#f4f4f6"/><stop offset="1" stop-color="#7c8494"/></radialGradient><linearGradient id="gGrad" x1="0" y1="0" x2="1" y2="1"><stop offset="0" stop-color="#0a1a3a"/><stop offset="1" stop-color="#e8e8a0"/></linearGradient>
<pattern id="pHatch" width="3" height="3" patternUnits="userSpaceOnUse" patternTransform="rotate(45)"><rect width="3" height="3" fill="#fff"/><rect width="1.2" height="3" fill="#333"/></pattern>
</defs><g transform="translate(23,58)" ><path d="M-7,-5.8 h12.5 l3.5,3.2 v9.4 h-16z" fill="url(#gPage)" stroke="#3a6ab0" stroke-width="1.1" /><path d="M5.5,-5.8 v3.2 h3.5" fill="none" stroke="#3a6ab0" stroke-width="0.8" /></g><g transform="translate(47,58)" ><path d="M-8,-3 l4,-4 h6 l5,-1 v12 l-9,3 l-6,-2z" fill="#f2c230" stroke="#b58a1a" stroke-width="0.8" /><path d="M-3,-2 h6 v7 h-6z" fill="#c4d8ee" stroke="#8aa" stroke-width="1" /><path d="M6,5 l-6,0 l1,-3 l-4,4 l6,3 l-1,-2 h5z" fill="#1d3c78" stroke="none" stroke-width="1" /></g><g transform="translate(70,58)" ><rect x="-7" y="-7" width="14" height="14" fill="#3a6cc0" stroke="#1d3c78" stroke-width="1" rx="0" /><rect x="-4" y="-7" width="8" height="6" fill="#cfe0f5" stroke="none" stroke-width="1" rx="0" /><rect x="-4" y="2" width="8" height="5" fill="#e8eef8" stroke="none" stroke-width="1" rx="0" /><rect x="-3" y="3" width="2" height="4" fill="#3a6cc0" stroke="none" stroke-width="1" rx="0" /></g><g transform="translate(99,58)" ><path d="M-4,-2 l1,-6 h6 l3,6z" fill="#fff" stroke="#6a7a98" stroke-width="0.9" /><path d="M-7,-2 l2,-1 h11 l2,2 v4 l-4,4 h-8 l-3,-3z" fill="#dde3ee" stroke="#5f6f90" stroke-width="0.9" /><path d="M-4,3 h7 l-2,3 h-6z" fill="#fff" stroke="#7a8aa8" stroke-width="0.7" /></g><g transform="translate(122,58)" ><path d="M-7,-8 h9 l4,4 v8 h-13z" fill="#c4d8ee" stroke="#2c5aa0" stroke-width="1" /><circle cx="2" cy="1" r="4" fill="#e6eefb" stroke="#5c7fb8" stroke-width="1.5" /><line x1="-1" y1="4" x2="-5" y2="8" stroke="#a8782a" stroke-width="2.2" /></g><g transform="translate(145,58)" ><circle cx="2" cy="-2" r="6" fill="#5f9bd8" stroke="#3a70b0" stroke-width="1" /><path d="M-8,1 h12 v5 l-2,2 h-8 l-2,-2z" fill="#d4e0f0" stroke="#5f7fae" stroke-width="1" /><rect x="-6" y="-6" width="6" height="6" fill="#f2c230" stroke="#b58a1a" stroke-width="1" rx="0" /></g><g transform="translate(168,58)" ><circle cx="1" cy="-1" r="6.5" fill="#4e8fd6" stroke="#2a5fa8" stroke-width="1" /><path d="M-3,-5 q4,-3 8,1 q-4,2 -8,-1z" fill="#f2c230" stroke="none" stroke-width="1" /><path d="M-8,3 l5,-3 l6,5 l-6,3z" fill="#dfe6f0" stroke="#9ab" stroke-width="1" /></g><g transform="translate(197,58)" ><line x1="-8" y1="-3" x2="3" y2="3" stroke="#1d3c78" stroke-width="1.3" /><line x1="-8" y1="2" x2="3" y2="-3" stroke="#1d3c78" stroke-width="1.3" /><circle cx="5" cy="-3.5" r="2.5" fill="none" stroke="#1d3c78" stroke-width="1.4" /><circle cx="5" cy="3.5" r="2.5" fill="none" stroke="#1d3c78" stroke-width="1.4" /></g><g transform="translate(220,58)" ><rect x="-8" y="-7" width="10" height="10" fill="url(#gPage)" stroke="#2c5aa0" stroke-width="1.2" rx="0" /><path d="M-4,-3 h8 l3,3 v8 h-11z" fill="url(#gPage)" stroke="#2c5aa0" stroke-width="1.2" /></g><g transform="translate(242,58)" ><path d="M-6,-5 l8,-3 l6,8 l-6,8 l-9,-3z" fill="#f2c230" stroke="#a8861e" stroke-width="1" /><rect x="-4" y="-3" width="8" height="8" fill="#dfeaf8" stroke="#6c8ebf" stroke-width="1" rx="0" /><rect x="-3" y="-8" width="5" height="3" fill="#ccc" stroke="#777" stroke-width="0.6" rx="0" /></g><g transform="translate(266,58)" ><path d="M-8,7 l6,-7 l3,2 l-5,5z" fill="#222" stroke="none" stroke-width="1" /><path d="M-2,0 l9,-8 l2,2 l-8,8z" fill="#d4843a" stroke="#8a4a18" stroke-width="0.6" /></g><g transform="translate(289,58)" ><rect x="-8" y="0" width="8" height="7" fill="#e88a4a" stroke="#1d3c78" stroke-width="1.2" rx="0" /><path d="M2,-8 l5,0 l-3,5 h4 l-9,9 l3,-7 h-4z" fill="#f6d22e" stroke="#a8861e" stroke-width="0.7" /><rect x="-9" y="5" width="3" height="3" fill="#2d6cc8" stroke="none" stroke-width="1" rx="0" /></g><g transform="translate(319,58)" ><path d="M7,-4 Q-3,-10 -3.5,2" fill="none" stroke="#1d3c78" stroke-width="3.2" /><path d="M-9.5,0 L2.5,0 L-3.5,8.5z" fill="#1d3c78" stroke="none" stroke-width="1" /></g><g transform="translate(337,58)" ><path d="M-3,-1.5 h6 l-3,3.5z" fill="#1d3c78" stroke="none" stroke-width="1" /></g><g transform="translate(353,58)" ><path d="M-7,-4 Q3,-10 3.5,2" fill="none" stroke="#bcbcbc" stroke-width="3" /><path d="M-2,0 L9,0 L3.5,8z" fill="#bcbcbc" stroke="none" stroke-width="1" /></g><g transform="translate(371,58)" ><path d="M-3,-1.5 h6 l-3,3.5z" fill="#b0b0b0" stroke="none" stroke-width="1" /></g><g transform="translate(396,58)" ><path d="M-8,-4 q1,-3 3,0 l1,-2 q2,-2 3,1 q2,-2 3,1 l3,6 l-5,5 l-6,-4z" fill="#d98a84" stroke="#a05a55" stroke-width="0.7" /><path d="M1,4 l5,-3 l3,5 l-5,3z" fill="#1d3c78" stroke="none" stroke-width="1" /><path d="M5,-8 v8 M1,-4 h8" fill="none" stroke="#2d5fb4" stroke-width="1.6" /></g><g transform="translate(419,58)" ><circle cx="-1" cy="-2" r="5" fill="#dbe8f8" stroke="#6a88b8" stroke-width="1.6" /><line x1="3" y1="2" x2="8" y2="8" stroke="#a0692a" stroke-width="2.4" /><text x="3" y="-2" font-size="9" fill="#111" font-weight="bold" font-family="Liberation Sans, sans-serif" >±</text></g><g transform="translate(441,58)" ><circle cx="-1" cy="-2" r="5" fill="#dbe8f8" stroke="#6a88b8" stroke-width="1.6" /><line x1="3" y1="2" x2="8" y2="8" stroke="#a0692a" stroke-width="2.4" /><rect x="-4" y="-5" width="6" height="6" fill="none" stroke="#1d3c78" stroke-width="1.2" rx="0" /><path d="M5,5 h4 v4z" fill="#111" stroke="none" stroke-width="1" /></g><g transform="translate(465,58)" ><circle cx="-1" cy="-2" r="5" fill="#dbe8f8" stroke="#6a88b8" stroke-width="1.6" /><line x1="3" y1="2" x2="8" y2="8" stroke="#a0692a" stroke-width="2.4" /><path d="M-6,-1 q2,-6 8,-4 l-1,-3 l5,4 l-6,3 l0,-2 q-4,-1 -6,2z" fill="#1d3c78" stroke="none" stroke-width="1" /></g><g transform="translate(494,58)" ><rect x="-8" y="-8" width="4" height="4" fill="#e02020" stroke="none" stroke-width="1" rx="0" /><rect x="-4" y="-8" width="4" height="4" fill="#e0e020" stroke="none" stroke-width="1" rx="0" /><rect x="0" y="-8" width="4" height="4" fill="#20c020" stroke="none" stroke-width="1" rx="0" /><rect x="4" y="-8" width="4" height="4" fill="#8020e0" stroke="none" stroke-width="1" rx="0" /><path d="M-4,-3 h10 l-2,5 h-8z" fill="#e6b8a8" stroke="#a07060" stroke-width="0.6" /><text x="-8" y="8" font-size="9" fill="#2a4a8a" font-weight="bold" font-family="Liberation Sans, sans-serif" >S</text><text x="1" y="8" font-size="9" fill="#2a4a8a" font-weight="bold" font-family="Liberation Sans, sans-serif" >A</text></g><g transform="translate(517,58)" ><rect x="-8" y="-8" width="16" height="16" fill="#e8f0fa" stroke="#2c5aa0" stroke-width="1.4" rx="0" /><rect x="-1" y="-6" width="3" height="3" fill="#fff" stroke="#1d3c78" stroke-width="0.7" rx="0" /><rect x="4" y="-6" width="3" height="3" fill="#fff" stroke="#1d3c78" stroke-width="0.7" rx="0" /><rect x="-1" y="-1" width="3" height="3" fill="#7ba3d4" stroke="#1d3c78" stroke-width="0.7" rx="0" /><rect x="4" y="-1" width="3" height="3" fill="#7ba3d4" stroke="#1d3c78" stroke-width="0.7" rx="0" /><rect x="2" y="4" width="3" height="3" fill="#f0e060" stroke="#1d3c78" stroke-width="0.7" rx="0" /><line x1="-4" y1="-8" x2="-4" y2="8" stroke="#2c5aa0" stroke-width="1" /><rect x="-7" y="-6" width="2" height="1.4" fill="#1d3c78" stroke="none" stroke-width="1" rx="0" /><rect x="-7" y="-2" width="2" height="1.4" fill="#1d3c78" stroke="none" stroke-width="1" rx="0" /><rect x="-7" y="2" width="2" height="1.4" fill="#1d3c78" stroke="none" stroke-width="1" rx="0" /><rect x="-7" y="5" width="2" height="1.4" fill="#1d3c78" stroke="none" stroke-width="1" rx="0" /></g><g transform="translate(540,58)" ><path d="M-8,-8 h8 v16 h-8z" fill="#e8f0fa" stroke="#2c5aa0" stroke-width="1.3" /><rect x="-6" y="-6" width="4" height="3" fill="#7ba3d4" stroke="#1d3c78" stroke-width="0.5" rx="0" /><rect x="-6" y="-1" width="4" height="3" fill="#7ba3d4" stroke="#1d3c78" stroke-width="0.5" rx="0" /><rect x="-6" y="4" width="4" height="3" fill="#7ba3d4" stroke="#1d3c78" stroke-width="0.5" rx="0" /><path d="M0,-5 q7,0 7,5 h2 l-3,4 l-3,-4 h2 q0,-3 -5,-3z" fill="#1d3c78" stroke="none" stroke-width="1" /><rect x="4" y="4" width="4" height="4" fill="#f6e070" stroke="#1d3c78" stroke-width="0.8" rx="0" /></g><g transform="translate(563,58)" ><rect x="-8" y="-7" width="16" height="14" fill="#9eb4cc" stroke="none" stroke-width="1" rx="0" /><path d="M-8,-7 h16 v5 l-16,6z" fill="#c8d6e6" stroke="none" stroke-width="1" /><path d="M-8,2 l16,-4 v4 l-16,5z" fill="#6f93bd" stroke="none" stroke-width="1" /><path d="M-6,-2 q5,-4 12,-2" fill="none" stroke="#fff" stroke-width="1.5" /></g><g transform="translate(586,58)" ><rect x="-3" y="-2" width="10" height="10" fill="#e4e4e4" stroke="#8a8a8a" stroke-width="1" rx="0" /><rect x="-5" y="-4" width="10" height="10" fill="#eef3fa" stroke="#8aa0c0" stroke-width="1" rx="0" /><path d="M-6,-3 q-2,-3 2,-3 q3,-3 5,0 q4,-1 3,3 q2,3 -2,4 q-1,3 -4,1 q-4,2 -4,-2 q-3,-1 0,-3z" fill="#fff" stroke="#e02030" stroke-width="1.6" /></g><g transform="translate(609,58)" ><rect x="-6" y="-8" width="12" height="16" fill="#111" stroke="none" stroke-width="1" rx="1" /><rect x="-4.5" y="-6.5" width="9" height="3" fill="#3c9a4a" stroke="none" stroke-width="1" rx="0" /><rect x="-4.5" y="-1.5" width="2" height="2" fill="#fff" stroke="none" stroke-width="1" rx="0" /><rect x="-4.5" y="1.5" width="2" height="2" fill="#fff" stroke="none" stroke-width="1" rx="0" /><rect x="-4.5" y="4.5" width="2" height="2" fill="#fff" stroke="none" stroke-width="1" rx="0" /><rect x="-1" y="-1.5" width="2" height="2" fill="#fff" stroke="none" stroke-width="1" rx="0" /><rect x="-1" y="1.5" width="2" height="2" fill="#fff" stroke="none" stroke-width="1" rx="0" /><rect x="-1" y="4.5" width="2" height="2" fill="#fff" stroke="none" stroke-width="1" rx="0" /><rect x="2.5" y="-1.5" width="2" height="2" fill="#fff" stroke="none" stroke-width="1" rx="0" /><rect x="2.5" y="1.5" width="2" height="2" fill="#fff" stroke="none" stroke-width="1" rx="0" /><rect x="2.5" y="4.5" width="2" height="2" fill="#fff" stroke="none" stroke-width="1" rx="0" /><rect x="2.5" y="-1.5" width="2" height="2" fill="#e04040" stroke="none" stroke-width="1" rx="0" /></g><g transform="translate(638,58)" ><rect x="-7.5" y="-7.5" width="15" height="15" fill="url(#gHelp)" stroke="#123f88" stroke-width="1" rx="3" /><text x="-3.6" y="5.5" font-size="14" fill="#fff" font-weight="bold" font-family="Liberation Sans, sans-serif" >?</text></g><g transform="translate(678,58)" ><text x="-9" y="6" font-size="17" fill="#111" font-weight="normal" font-family="Liberation Sans, sans-serif" >A</text><path d="M-2,7 l8,-9 l2,2 l-8,9z" fill="#d4843a" stroke="#7a4a18" stroke-width="0.5" /><path d="M-4,9 l2,-3 l2,2z" fill="#111" stroke="none" stroke-width="1" /></g><g transform="translate(807,58)" ><path d="M-8,4 v6 M8,4 v6 M-8,7 h16" fill="none" stroke="#111" stroke-width="1.6" /><path d="M-7,7 l3,-2 v4z M7,7 l-3,-2 v4z" fill="#111" stroke="none" stroke-width="1" /><path d="M-3,5 l8,-12 l2,1.5 l-7,11z" fill="#d4843a" stroke="#7a4a18" stroke-width="0.5" /><path d="M-5,7 l2,-3 l3,1z" fill="#111" stroke="none" stroke-width="1" /></g><g transform="translate(936,58)" ><rect x="-8" y="-3" width="14" height="11" fill="#dbe6f6" stroke="#2c5aa0" stroke-width="1.2" rx="0" /><rect x="-8" y="-3" width="14" height="3" fill="#6d94cf" stroke="none" stroke-width="1" rx="0" /><line x1="-3" y1="-3" x2="-3" y2="8" stroke="#2c5aa0" stroke-width="1" /><line x1="2" y1="-3" x2="2" y2="8" stroke="#2c5aa0" stroke-width="1" /><line x1="-8" y1="4" x2="6" y2="4" stroke="#2c5aa0" stroke-width="1" /><path d="M-2,2 l8,-10 l2,1.5 l-7,10z" fill="#d4843a" stroke="#7a4a18" stroke-width="0.5" /><path d="M-4,4 l2,-3 l3,1z" fill="#111" stroke="none" stroke-width="1" /></g><g transform="translate(199,86)" ><rect x="-8" y="-8" width="16" height="16" fill="#5585c4" stroke="none" stroke-width="1" rx="0" /><circle cx="0" cy="0" r="7.2" fill="#e8eef6" stroke="none" stroke-width="1" /><circle cx="0" cy="0" r="5.6" fill="none" stroke="#3a4658" stroke-width="2.6" stroke-dasharray="2.4 2"/><circle cx="0" cy="0" r="4.2" fill="#3a4658" stroke="none" stroke-width="1" /><circle cx="0" cy="0" r="2.2" fill="#7fa8d8" stroke="#8a5a30" stroke-width="0.8" /></g><g transform="translate(222,86)" ><rect x="-8" y="-8" width="16" height="16" fill="#e8e8e8" stroke="#555" stroke-width="1" rx="0" stroke-dasharray="2 1.5"/><path d="M-7,0 l7,-7 l7,7 v7 h-14z" fill="#222" stroke="none" stroke-width="1" /></g><g transform="translate(262,86)" ><path d="M-8,4 l8,-3.5 l8,3.5 l-8,3.5z" fill="#6a8fc4" stroke="#4a6ea8" stroke-width="0.6" /><path d="M-8,0.5 l8,-3.5 l8,3.5 l-8,3.5z" fill="#9db9de" stroke="#4a6ea8" stroke-width="0.6" /><path d="M-8,-3 l8,-3.5 l8,3.5 l-8,3.5z" fill="#dce8f6" stroke="#4a6ea8" stroke-width="0.6" /></g><g transform="translate(287,86)" ><path d="M-3,2 q-4,-4 -2,-7 q2,-3 5,-3 q3,0 5,3 q2,3 -2,7z" fill="#fbf3b0" stroke="#b09a30" stroke-width="1" transform="translate(-0.5,0)"/><rect x="-3" y="2" width="5" height="4" fill="#9aa" stroke="#556" stroke-width="0.6" rx="0" /></g><g transform="translate(303,86)" ><circle cx="0" cy="0" r="6" fill="#f6e850" stroke="#6a9a3a" stroke-width="1.4" /><circle cx="0" cy="0" r="7" fill="none" stroke="#3a78c8" stroke-width="0.8" /></g><g transform="translate(320,86)" ><circle cx="-2" cy="-2" r="5.5" fill="#9ab8dc" stroke="#5a7fae" stroke-width="1" /><circle cx="-2" cy="-2" r="2.5" fill="#e8e0a0" stroke="none" stroke-width="1" /><rect x="0" y="1" width="7" height="6" fill="#fff" stroke="#8aa0c0" stroke-width="1" rx="0" /></g><g transform="translate(337,86)" ><path d="M-6,-1 v-4 q0,-4 4,-4 q3,0 3,3" fill="none" stroke="#b8a020" stroke-width="2" /><rect x="-3" y="-3" width="8" height="10" fill="#e8d84a" stroke="#8a7a10" stroke-width="1" rx="1" /><rect x="-1" y="-1" width="4" height="2" fill="#8a7a10" stroke="none" stroke-width="1" rx="0" /></g><g transform="translate(585,86)" ><path d="M-8,4 l8,-3.5 l8,3.5 l-8,3.5z" fill="#e8c040" stroke="#4a6ea8" stroke-width="0.6" /><path d="M-8,0.5 l8,-3.5 l8,3.5 l-8,3.5z" fill="#f0d860" stroke="#4a6ea8" stroke-width="0.6" /><path d="M-8,-3 l8,-3.5 l8,3.5 l-8,3.5z" fill="#dce8f6" stroke="#4a6ea8" stroke-width="0.6" /><path d="M-8,8 l4,-4 M-4,4 v3 M-4,4 h-3" fill="none" stroke="#1d3c78" stroke-width="1.4" /></g><g transform="translate(609,86)" ><path d="M-8,4 l8,-3.5 l8,3.5 l-8,3.5z" fill="#6a8fc4" stroke="#4a6ea8" stroke-width="0.6" /><path d="M-8,0.5 l8,-3.5 l8,3.5 l-8,3.5z" fill="#9db9de" stroke="#4a6ea8" stroke-width="0.6" /><path d="M-8,-3 l8,-3.5 l8,3.5 l-8,3.5z" fill="#dce8f6" stroke="#4a6ea8" stroke-width="0.6" /><path d="M-2,-2 q-1,-6 5,-6 q5,1 4,6" fill="none" stroke="#1d3c78" stroke-width="1.8" /><path d="M-5,-3 l6,0 l-3,4z" fill="#1d3c78" stroke="none" stroke-width="1" /></g><rect x="346" y="81.5" width="9.5" height="9.5" fill="#808080" stroke="#222" stroke-width="1.2" rx="0" /><rect x="645" y="81.5" width="9.5" height="9.5" fill="#808080" stroke="#222" stroke-width="1.2" rx="0" /><g transform="translate(23,113.5)" ><rect x="-7" y="-7.5" width="14" height="11" fill="#fff" stroke="#111" stroke-width="1.3" rx="0" /><path d="M-3,8.5 l6,-12.5 l6,12.5z" fill="#fff" stroke="#111" stroke-width="1.3" /></g><g transform="translate(53,113.5)" ><rect x="-7" y="-3" width="9" height="9" fill="#dce8f6" stroke="#111" stroke-width="1.2" rx="0" /><path d="M-7,-3 l4,-4 h9 l-4,4 M6,-7 v9 l-4,4" fill="none" stroke="#111" stroke-width="1.2" /></g><g transform="translate(76,113.5)" ><path d="M-7,-4 l7,-4 l7,4 v8 l-7,4 l-7,-4z M-7,-4 l7,4 l7,-4 M0,0 v8" fill="#fff" stroke="#111" stroke-width="1.2" /></g><g transform="translate(98,113.5)" ><circle cx="0" cy="0" r="7" fill="url(#gSph)" stroke="#2a5a98" stroke-width="1" /><path d="M-6,-3 l6,6 l6,-6" fill="none" stroke="#2a4a80" stroke-width="1" /><ellipse cx="0" cy="7.5" rx="6" ry="1.5" fill="#aaa" stroke="none" stroke-width="1" /></g><g transform="translate(121,113.5)" ><circle cx="0" cy="0" r="7.5" fill="url(#gOrb)" stroke="none" stroke-width="1" /></g><g transform="translate(151,113.5)" ><circle cx="-2" cy="-2" r="6" fill="url(#gSph)" stroke="#2a5a98" stroke-width="1" /><rect x="0" y="-2" width="7" height="10" fill="#5f8fd0" stroke="#1d3c78" stroke-width="1" rx="0" /><rect x="2" y="0" width="3" height="1.6" fill="#e8f0fa" stroke="none" stroke-width="1" rx="0" /><rect x="2" y="3" width="3" height="1.6" fill="#e8f0fa" stroke="none" stroke-width="1" rx="0" /><rect x="2" y="6" width="3" height="1.6" fill="#e8f0fa" stroke="none" stroke-width="1" rx="0" /></g><g transform="translate(192,113.5)" ><path d="M-7,-7 v14 M7,-7 v14 M-7,-1 h14" fill="none" stroke="#111" stroke-width="1.8" /><path d="M-7,-1 l4,-2.6 v5.2z M7,-1 l-4,-2.6 v5.2z" fill="#111" stroke="none" stroke-width="1" /></g><g transform="translate(215,113.5)" ><path d="M-9,-2.5 l5,-5.5 M3.5,8 l5,-5.5 M-6.5,-5.5 l13,11" fill="none" stroke="#111" stroke-width="1.6" /><path d="M-6.5,-5.5 l4.5,1 l-2.5,3z M6.5,5.5 l-4.5,-1 l2.5,-3z" fill="#111" stroke="none" stroke-width="1" /></g><g transform="translate(238,113.5)" ><path d="M-6,7 q0,-11 11,-12" fill="none" stroke="#555" stroke-width="1.6" /><path d="M-3,7 q1,-8 8,-9" fill="none" stroke="#111" stroke-width="1.4" /><path d="M5,-2 l-4,0 l2,3z M-3,7 l-2,-3 l3.5,0z" fill="#111" stroke="none" stroke-width="1" /><rect x="-9" y="5" width="4" height="4" fill="#2d6cc8" stroke="none" stroke-width="1" rx="0" /><rect x="4" y="-8" width="4" height="4" fill="#2d6cc8" stroke="none" stroke-width="1" rx="0" /></g><g transform="translate(261,113.5)" ><path d="M-2,7 v-11 M-4,6 h12 M-2,-1 h3 l3,3 h4 M5,2 v-7" fill="none" stroke="#111" stroke-width="1.4" /><text x="-10" y="1.5" font-size="6.5" fill="#1d4a98" font-weight="bold" font-family="Liberation Sans, sans-serif" >Y</text><text x="3.5" y="-4" font-size="6.5" fill="#1d4a98" font-weight="bold" font-family="Liberation Sans, sans-serif" >X</text><circle cx="-6.5" cy="-6.5" r="1.4" fill="none" stroke="#1d4a98" stroke-width="1" /><circle cx="-7" cy="6" r="1.4" fill="none" stroke="#1d4a98" stroke-width="1" /></g><g transform="translate(290,113.5)" ><circle cx="0" cy="0" r="7.3" fill="none" stroke="#333" stroke-width="1.3" /><path d="M0,0 l-4.5,-5" fill="none" stroke="#111" stroke-width="1.6" /><path d="M-5.5,-6 l4,1.5 l-2.5,2.5z" fill="#111" stroke="none" stroke-width="1" /></g><g transform="translate(313,113.5)" ><path d="M-4,-6 q8,-2 9,8" fill="none" stroke="#666" stroke-width="1.6" /><path d="M-7,8 l4,-6 h3 l4,-6" fill="none" stroke="#111" stroke-width="1.6" /><path d="M5,-6 l-4,1 l3,3z" fill="#111" stroke="none" stroke-width="1" /></g><g transform="translate(336,113.5)" ><circle cx="0" cy="0" r="7.3" fill="none" stroke="#333" stroke-width="1.3" /><path d="M-4.5,-5 l9,10" fill="none" stroke="#111" stroke-width="1.6" /><path d="M-5.5,-6 l4,1.5 l-2.5,2.5z M5.5,6 l-4,-1.5 l2.5,-2.5z" fill="#111" stroke="none" stroke-width="1" /></g><g transform="translate(359,113.5)" ><path d="M-8,7 h15 M-8,7 l10,-14" fill="none" stroke="#111" stroke-width="1.5" /><path d="M2,-4 q5,4 5,10" fill="none" stroke="#111" stroke-width="1.2" /><path d="M1,-5 l4,1 l-2,2.5z M7,6 l-2,-3.5 l3.5,0z" fill="#111" stroke="none" stroke-width="1" /></g><g transform="translate(387,113.5)" ><path d="M-7,-7 v14 M6,-7 v14 M-7,-4 h13" fill="none" stroke="#111" stroke-width="1.5" /><path d="M-4,-7 l8,5 l-2,3 l4,6 l-7,-5 l2,-3z" fill="#f2e03a" stroke="#8a7a10" stroke-width="0.7" /></g><g transform="translate(410,113.5)" ><path d="M-7,-7 v14 M-7,-4 h14 M-7,2 h9 M7,-7 v5 M2,-1 v8" fill="none" stroke="#111" stroke-width="1.4" /><path d="M7,-4 l-3,-1.5 v3z M2,2 l-3,-1.5 v3z" fill="#111" stroke="none" stroke-width="1" /></g><g transform="translate(433,113.5)" ><path d="M-8,-7 v14 M-2,-7 v14 M8,-7 v14 M-8,-3 h16 M3,-5 v4" fill="none" stroke="#111" stroke-width="1.3" /></g><g transform="translate(463,113.5)" ><path d="M-8,-3 l4,2 l-2,2z" fill="#111" stroke="none" stroke-width="1" /><path d="M-6,-1 l5,2" fill="none" stroke="#111" stroke-width="1" /><path d="M-3,-5 l6,2 l4,9 l-3,1 l-5,-6z" fill="#e6cf3a" stroke="#6a5a10" stroke-width="0.8" /><text x="4" y="-3" font-size="7" fill="#1d3c78" font-weight="bold" font-family="Liberation Sans, sans-serif" >A</text></g><g transform="translate(486,113.5)" ><rect x="-8" y="-6" width="16" height="12" fill="#cfe0f4" stroke="#2c5aa0" stroke-width="1.4" rx="0" /><line x1="0" y1="-6" x2="0" y2="6" stroke="#2c5aa0" stroke-width="1.2" /><circle cx="-4" cy="0" r="2.6" fill="none" stroke="#1d3c78" stroke-width="1" /><path d="M-4,-4 v8 M-8,0 h8" fill="none" stroke="#1d3c78" stroke-width="0.8" /><text x="2" y="3.5" font-size="8" fill="#1d3c78" font-weight="bold" font-family="Liberation Sans, sans-serif" >.1</text></g><g transform="translate(509,113.5)" ><circle cx="0" cy="0" r="7.5" fill="#fff" stroke="#444" stroke-width="1.3" /><path d="M-3,0 h6 M0,-3 v6" fill="none" stroke="#111" stroke-width="1.8" /></g><g transform="translate(537,113.5)" ><text x="-5.5" y="1" font-size="13" fill="#2456a8" font-weight="bold" font-family="Liberation Sans, sans-serif" >A</text><path d="M-8,3 v6 M8,3 v6 M-8,6 h16" fill="none" stroke="#111" stroke-width="1.6" /><path d="M-8,6 l3,-2 v4z M8,6 l-3,-2 v4z" fill="#111" stroke="none" stroke-width="1" /></g><g transform="translate(560,113.5)" ><path d="M-8,3 v6 M8,3 v6 M-8,6 h16" fill="none" stroke="#111" stroke-width="1.6" /><path d="M-8,6 l3,-2 v4z M8,6 l-3,-2 v4z" fill="#111" stroke="none" stroke-width="1" /><path d="M-3,4 l7,-11 l3,2 l-7,11z" fill="#e8b03a" stroke="#8a5a18" stroke-width="0.6" /><path d="M4,-7 l2,-2 l3,2 l-2,2z" fill="#e06a5a" stroke="none" stroke-width="1" /><path d="M-4,6 l1,-2 l2,1.5z" fill="#111" stroke="none" stroke-width="1" /></g><g transform="translate(583,113.5)" ><path d="M-8,-3 v12 M6,-8 v14 M-8,3 h14" fill="none" stroke="#111" stroke-width="1.5" /><path d="M-6,-6 h12 M-3,-8 v5 M3,-8 v5" fill="none" stroke="#2a6cc8" stroke-width="1.4" /><path d="M-8,3 l3,-2 v4z M6,3 l-3,-2 v4z" fill="#111" stroke="none" stroke-width="1" /></g><g transform="translate(713,113.5)" ><path d="M-8,4 v6 M8,4 v6 M-8,7 h16" fill="none" stroke="#111" stroke-width="1.6" /><path d="M-7,7 l3,-2 v4z M7,7 l-3,-2 v4z" fill="#111" stroke="none" stroke-width="1" /><path d="M-3,5 l8,-12 l2,1.5 l-7,11z" fill="#d4843a" stroke="#7a4a18" stroke-width="0.5" /><path d="M-5,7 l2,-3 l3,1z" fill="#111" stroke="none" stroke-width="1" /></g><g transform="translate(754,113.5)" ><rect x="-8" y="-8" width="11" height="11" fill="#cfe0f4" stroke="#2c5aa0" stroke-width="1.3" rx="0" /><rect x="-7" y="-7" width="4" height="4" fill="#7ba3d4" stroke="none" stroke-width="1" rx="0" /><rect x="-2" y="-7" width="4" height="4" fill="#7ba3d4" stroke="none" stroke-width="1" rx="0" /><rect x="-3" y="-1" width="11" height="9" fill="#e6eefa" stroke="#2c5aa0" stroke-width="1.3" rx="0" /><rect x="-1" y="2" width="7" height="1.2" fill="#7ba3d4" stroke="none" stroke-width="1" rx="0" /><rect x="-1" y="4.5" width="7" height="1.2" fill="#7ba3d4" stroke="none" stroke-width="1" rx="0" /></g><g transform="translate(777,113.5)" ><rect x="-7.5" y="-7.5" width="15" height="15" fill="url(#gPage)" stroke="#2c5aa0" stroke-width="1.6" rx="0" /><rect x="-5" y="-5" width="10" height="10" fill="#b4cdea" stroke="#6c93c8" stroke-width="0.8" rx="0" /></g><g transform="translate(800,113.5)" ><path d="M-2,-7 h9 v14 h-14 v-7 h5z" fill="#b4cdea" stroke="#2c5aa0" stroke-width="1.6" /></g><g transform="translate(823,113.5)" ><rect x="-8" y="-8" width="8" height="5" fill="#f0e070" stroke="#8a8a30" stroke-width="1" rx="0" /><path d="M2,-6 q5,0 5,3 l2,0 l-3,3 l-3,-3 h2 q0,-1 -3,-1z" fill="#1d3c78" stroke="none" stroke-width="1" /><rect x="-3" y="1" width="10" height="7" fill="#dce8f6" stroke="#2c5aa0" stroke-width="1.4" rx="0" /><rect x="-1" y="3" width="6" height="3" fill="#b4cdea" stroke="#2c5aa0" stroke-width="0.6" rx="0" /></g><g transform="translate(846,113.5)" ><rect x="-8" y="-8" width="10" height="16" fill="#cfe0f4" stroke="#2c5aa0" stroke-width="1.3" rx="0" /><rect x="-6" y="2" width="6" height="4" fill="#7ba3d4" stroke="#2c5aa0" stroke-width="0.6" rx="0" /><path d="M-7,-4 l11,5 M-7,1 l11,-5" fill="none" stroke="#1d3c78" stroke-width="1.2" /><circle cx="6" cy="-4" r="2.2" fill="none" stroke="#1d3c78" stroke-width="1.2" /><circle cx="6" cy="2.5" r="2.2" fill="none" stroke="#1d3c78" stroke-width="1.2" /></g><g transform="translate(992,113.5)" ><path d="M-6,-8 v14 h14" fill="none" stroke="#2a5aa8" stroke-width="1.7" /><path d="M-6,-8 l-2.5,4 h5z M8,6 l-4,-2.5 v5z" fill="#2a5aa8" stroke="none" stroke-width="1" /><path d="M-6,6 l7,-7" fill="none" stroke="#2a5aa8" stroke-width="1.2" /></g><g transform="translate(1015,113.5)" ><path d="M-6,-8 v14 h14" fill="none" stroke="#2a5aa8" stroke-width="1.7" /><path d="M-6,-8 l-2.5,4 h5z M8,6 l-4,-2.5 v5z" fill="#2a5aa8" stroke="none" stroke-width="1" /><rect x="-3" y="-7" width="10" height="9" fill="#e6eefa" stroke="#2a5aa8" stroke-width="1.3" rx="0" /><rect x="0" y="-4" width="5" height="1" fill="#7ba3d4" stroke="none" stroke-width="1" rx="0" /><rect x="0" y="-2" width="5" height="1" fill="#7ba3d4" stroke="none" stroke-width="1" rx="0" /></g><g transform="translate(1049,113.5)" ><circle cx="0" cy="0" r="6.5" fill="#3a7ed0" stroke="#1a4a98" stroke-width="0.8" /><path d="M-4,-3 q2,-3 5,-2 q1,2 -1,3 q1,3 -2,5 q-3,-2 -2,-6z" fill="#3aa84a" stroke="none" stroke-width="1" /><path d="M3,1 q2,0 2,3 q-2,2 -3,0z" fill="#3aa84a" stroke="none" stroke-width="1" /><path d="M-4,-4 q3,-2 6,0" fill="none" stroke="#bfe0ff" stroke-width="1" /></g><path d="M175,85 l4,4 l4,-4" fill="none" stroke="#333" stroke-width="1.8"/><path d="M562,85 l4,4 l4,-4" fill="none" stroke="#333" stroke-width="1.8"/><path d="M777,56 l4,4 l4,-4" fill="none" stroke="#333" stroke-width="1.8"/><path d="M906,56 l4,4 l4,-4" fill="none" stroke="#333" stroke-width="1.8"/><path d="M1036,56 l4,4 l4,-4" fill="none" stroke="#333" stroke-width="1.8"/><path d="M777,84 l4,4 l4,-4" fill="none" stroke="#333" stroke-width="1.8"/><path d="M940,84 l4,4 l4,-4" fill="none" stroke="#333" stroke-width="1.8"/><path d="M1072,84 l4,4 l4,-4" fill="none" stroke="#333" stroke-width="1.8"/><path d="M1199,84 l4,4 l4,-4" fill="none" stroke="#aaa" stroke-width="1.8"/><path d="M687,112 l4,4 l4,-4" fill="none" stroke="#333" stroke-width="1.8"/><path d="M951,112 l4,4 l4,-4" fill="none" stroke="#aaa" stroke-width="1.8"/><path d="M1196,112 l4,4 l4,-4" fill="none" stroke="#333" stroke-width="1.8"/><g transform="translate(12,149.5)" ><line x1="-6" y1="6" x2="6" y2="-6" stroke="#111" stroke-width="1.6" /><rect x="-7.5" y="4.5" width="3" height="3" fill="#2d6cc8" stroke="none" stroke-width="1" rx="0" /><rect x="4.5" y="-7.5" width="3" height="3" fill="#2d6cc8" stroke="none" stroke-width="1" rx="0" /></g><g transform="translate(12,171)" ><line x1="-7" y1="7" x2="7" y2="-7" stroke="#111" stroke-width="1.6" /><rect x="-3.5" y="0.5" width="3" height="3" fill="#2d6cc8" stroke="none" stroke-width="1" rx="0" /><rect x="1.5" y="-4.5" width="3" height="3" fill="#2d6cc8" stroke="none" stroke-width="1" rx="0" /><path d="M8,-8 l-5,1.5 l3.5,3.5z M-8,8 l5,-1.5 l-3.5,-3.5z" fill="#111" stroke="none" stroke-width="1" /></g><g transform="translate(12,193)" ><path d="M-7,4 h8 q6,0 6,-5 q0,-4 -4,-4" fill="none" stroke="#444" stroke-width="1.6" /><rect x="-8.5" y="2.5" width="3" height="3" fill="#2d6cc8" stroke="none" stroke-width="1" rx="0" /><rect x="-0.5" y="2.5" width="3" height="3" fill="#2d6cc8" stroke="none" stroke-width="1" rx="0" /></g><g transform="translate(12,214.5)" ><path d="M0,-7 l7.5,5.5 l-3,8.5 h-9 l-3,-8.5z" fill="#fff" stroke="#111" stroke-width="1.7" /></g><g transform="translate(12,237)" ><rect x="-7" y="-5" width="14" height="10" fill="#fff" stroke="#111" stroke-width="1.7" rx="0" /><rect x="-8.5" y="3.5" width="3" height="3" fill="#2d6cc8" stroke="none" stroke-width="1" rx="0" /><rect x="5.5" y="-6.5" width="3" height="3" fill="#2d6cc8" stroke="none" stroke-width="1" rx="0" /></g><g transform="translate(12,258.5)" ><path d="M-7,7 q1,-12 13,-13" fill="none" stroke="#444" stroke-width="1.7" /><rect x="-8.5" y="5.5" width="3" height="3" fill="#2d6cc8" stroke="none" stroke-width="1" rx="0" /><rect x="4.5" y="-7.5" width="3" height="3" fill="#2d6cc8" stroke="none" stroke-width="1" rx="0" /><rect x="-4.5" y="-3.5" width="3" height="3" fill="#2d6cc8" stroke="none" stroke-width="1" rx="0" /></g><g transform="translate(12,280.5)" ><circle cx="0" cy="0" r="7.5" fill="#fff" stroke="#111" stroke-width="1.7" /><line x1="-1" y1="1" x2="4" y2="-4" stroke="#444" stroke-width="1.2" /><rect x="-2.5" y="-0.5" width="3" height="3" fill="#2d6cc8" stroke="none" stroke-width="1" rx="0" /></g><g transform="translate(12,303)" ><path d="M-3,-7 q5,-2 6,2 q5,1 3,5 q2,5 -3,5 q-3,4 -6,0 q-5,1 -4,-4 q-3,-4 1,-5 q0,-3 3,-3z" fill="#fff" stroke="#111" stroke-width="1.7" /></g><g transform="translate(12,325)" ><path d="M-8,6 q4,2 6,-4 q2,-6 5,-2 q2,2 5,-5" fill="none" stroke="#111" stroke-width="1.6" /></g><g transform="translate(12,346)" ><ellipse cx="0" cy="0" rx="8" ry="5.5" fill="#fff" stroke="#111" stroke-width="1.7" /><rect x="-9.5" y="-1.5" width="3" height="3" fill="#2d6cc8" stroke="none" stroke-width="1" rx="0" /><rect x="6.5" y="-1.5" width="3" height="3" fill="#2d6cc8" stroke="none" stroke-width="1" rx="0" /><rect x="-1.5" y="4.0" width="3" height="3" fill="#2d6cc8" stroke="none" stroke-width="1" rx="0" /></g><g transform="translate(12,368.5)" ><path d="M-4,5 q-6,-3 -3,-7 q4,-5 12,-2 q5,3 1,7" fill="none" stroke="#444" stroke-width="1.7" /><rect x="-5.5" y="3.5" width="3" height="3" fill="#2d6cc8" stroke="none" stroke-width="1" rx="0" /><rect x="4.5" y="1.5" width="3" height="3" fill="#2d6cc8" stroke="none" stroke-width="1" rx="0" /></g><g transform="translate(12,391)" ><rect x="-7" y="-8" width="9" height="8" fill="#dce8f6" stroke="#2c5aa0" stroke-width="1" rx="0" /><rect x="-3" y="-4" width="9" height="8" fill="#f0e070" stroke="#2c5aa0" stroke-width="1" rx="0" /><circle cx="4" cy="5" r="3.5" fill="#f0e070" stroke="#2c5aa0" stroke-width="1" /><path d="M6,5 h3 v3z" fill="#111" stroke="none" stroke-width="1" /></g><g transform="translate(12,414)" ><rect x="-6" y="-6" width="10" height="8" fill="#f0e070" stroke="#2c5aa0" stroke-width="1.2" rx="0" /><circle cx="4" cy="4" r="3.5" fill="#f0e070" stroke="#2c5aa0" stroke-width="1.2" /></g><g transform="translate(12,435)" ><rect x="-1.5" y="-1.5" width="3" height="3" fill="#2456b8" stroke="none" stroke-width="1" rx="0" /></g><g transform="translate(12,457.5)" ><rect x="-5" y="-5" width="11" height="11" fill="url(#pHatch)" stroke="#111" stroke-width="1" rx="0" /><path d="M-8,-5 h16 M-8,6 h16 M-5,-8 v16 M6,-8 v16" fill="none" stroke="#2a5aa8" stroke-width="1.5" /></g><g transform="translate(12,479)" ><rect x="-5" y="-5" width="11" height="11" fill="url(#gGrad)" stroke="#111" stroke-width="1" rx="0" /><path d="M-8,-5 h16 M-8,6 h16 M-5,-8 v16 M6,-8 v16" fill="none" stroke="#123" stroke-width="1.8" /></g><g transform="translate(12,501.5)" ><path d="M-8,-6 h10 l6,6 v7 h-16z" fill="#dce8f6" stroke="#2c5aa0" stroke-width="1.5" /><circle cx="-1" cy="2" r="3.5" fill="#fff" stroke="#2c5aa0" stroke-width="1.3" /></g><g transform="translate(12,522.5)" ><rect x="-8" y="-7" width="16" height="14" fill="#fff" stroke="#4a6ea8" stroke-width="1" rx="0" /><rect x="-8" y="-7" width="16" height="4" fill="#4a7fd0" stroke="none" stroke-width="1" rx="0" /><line x1="-3" y1="-3" x2="-3" y2="7" stroke="#6a8ec8" stroke-width="1" /><line x1="2" y1="-3" x2="2" y2="7" stroke="#6a8ec8" stroke-width="1" /><line x1="-8" y1="0" x2="8" y2="0" stroke="#6a8ec8" stroke-width="1" /><line x1="-8" y1="3.5" x2="8" y2="3.5" stroke="#6a8ec8" stroke-width="1" /></g><g transform="translate(12,544)" ><text x="-6.5" y="7" font-size="19.5" fill="#111" font-weight="normal" font-family="Liberation Sans, sans-serif" >A</text></g><g transform="translate(37.5,149.5)" ><path d="M-5,-7 l7,1 v5 l-3,0 v6 l-4,-2z" fill="#7a9cc8" stroke="#5f86bf" stroke-width="0.5" /><path d="M2,-6 l4,-1 v11 l-7,3 v-6 l3,0z" fill="#b4c8e4" stroke="#5f86bf" stroke-width="0.5" /><path d="M-5,-7 l4,-1 l7,1 l-4,1z" fill="#dfe8f4" stroke="none" stroke-width="1" /></g><g transform="translate(37.5,171)" ><path d="M-8,-3 l5,-5 h11 v10 l-5,5 h-11z" fill="url(#gSolid)" stroke="#5f86bf" stroke-width="0.8" /><path d="M-8,-3 h11 l5,-5 M3,-3 v10" fill="none" stroke="#fff" stroke-width="0.8" /></g><g transform="translate(37.5,193)" ><path d="M-7,-7 l14,10 v4 h-14z" fill="url(#gSolid)" stroke="#5f86bf" stroke-width="0.8" /><path d="M-7,-7 l4,-1 l12,9 l-2,2" fill="#c8daf0" stroke="#5f86bf" stroke-width="0.6" /></g><g transform="translate(37.5,214.5)" ><path d="M0,-9 l7,14 q-7,5 -14,0z" fill="url(#gSolid)" stroke="#5f86bf" stroke-width="0.8" /></g><g transform="translate(37.5,237)" ><circle cx="0" cy="0" r="8" fill="url(#gSph)" stroke="#5f86bf" stroke-width="0.6" /></g><g transform="translate(37.5,258.5)" ><path d="M-7,-5 v10 q7,5 14,0 v-10z" fill="url(#gSolid)" stroke="#5f86bf" stroke-width="0.8" /><ellipse cx="0" cy="-5" rx="7" ry="2.8" fill="#dce8f6" stroke="#5f86bf" stroke-width="0.8" /></g><g transform="translate(37.5,280.5)" ><ellipse cx="0" cy="0" rx="8" ry="6.5" fill="url(#gSph)" stroke="#5f86bf" stroke-width="0.6" /><ellipse cx="0" cy="-1" rx="3" ry="2" fill="#4a70a8" stroke="none" stroke-width="1" /></g><g transform="translate(37.5,303)" ><path d="M0,-9 l7,13 l-6,4 l-8,-4z" fill="url(#gSolid)" stroke="#5f86bf" stroke-width="0.8" /><path d="M0,-9 l1,17" fill="none" stroke="#fff" stroke-width="0.8" /></g><g transform="translate(37.5,325)" ><path d="M-8,4 q2,-5 4,0 q2,-6 4,-1 q2,-6 4,-2 q2,-5 4,-3" fill="none" stroke="#3a6cb8" stroke-width="2" /></g><g transform="translate(37.5,346)" ><path d="M-8,3 l8,-8 l8,3 l-7,9z" fill="#b8cfea" stroke="#8fb0dc" stroke-width="0.8" /></g><g transform="translate(37.5,376)" ><path d="M-8,-2 l3,-4 h8 v10 l-3,4 h-8z M-8,-2 h8 l3,-4 M0,-2 v10" fill="#fff" stroke="#111" stroke-width="1.2" /><path d="M6,8 v-14" fill="none" stroke="#1d3c78" stroke-width="1.6" /><path d="M6,-9 l-2.5,4 h5z" fill="#1d3c78" stroke="none" stroke-width="1" /></g><g transform="translate(37.5,397)" ><path d="M-7,2 l7,-3 l7,3 v3 l-7,3 l-7,-3z" fill="#9db9de" stroke="#3a5a8a" stroke-width="0.8" stroke-dasharray="1.5 1"/><path d="M0,0 v-6" fill="none" stroke="#1d3c78" stroke-width="1.6" /><path d="M0,-9 l-3,4 h6z" fill="#1d3c78" stroke="none" stroke-width="1" /></g><g transform="translate(37.5,418)" ><path d="M-8,-2 q8,-6 14,8 l-4,1 q-4,-9 -9,-5z" fill="#9db9de" stroke="#7ba3d4" stroke-width="0.6" /></g><g transform="translate(37.5,441)" ><path d="M-7,0 v5 q7,4 14,0 v-5z" fill="#5f8fd0" stroke="#3a5a8a" stroke-width="0.6" /><ellipse cx="0" cy="0" rx="7" ry="3" fill="#b8cfea" stroke="#3a5a8a" stroke-width="0.6" /><path d="M-5,-4 q3,-5 9,-3" fill="none" stroke="#1d3c78" stroke-width="1.8" /><path d="M-7,-3 l4,-3 l0,4z" fill="#1d3c78" stroke="none" stroke-width="1" /></g><g transform="translate(37.5,462)" ><path d="M-4,-7 h8 q-3,6 3,13 h-14 q6,-7 3,-13z" fill="#b8cfea" stroke="#8fb0dc" stroke-width="0.8" /></g><g transform="translate(37.5,491.5)" ><circle cx="-3" cy="0" r="6" fill="#9db9de" stroke="#2a5a8a" stroke-width="1.3" fill-opacity="0.6"/><circle cx="3" cy="0" r="6" fill="#9db9de" stroke="#2a5a8a" stroke-width="1.3" fill-opacity="0.6"/></g><g transform="translate(37.5,513.5)" ><circle cx="-3" cy="0" r="6" fill="#9db9de" stroke="#2a5a8a" stroke-width="1.3" fill-opacity="0.6"/><circle cx="3" cy="0" r="6" fill="none" stroke="#2a5a8a" stroke-width="1.3" fill-opacity="0.6"/></g><g transform="translate(37.5,535.5)" ><circle cx="-3" cy="0" r="6" fill="none" stroke="#2a5a8a" stroke-width="1.3" fill-opacity="0.6"/><circle cx="3" cy="0" r="6" fill="none" stroke="#2a5a8a" stroke-width="1.3" fill-opacity="0.6"/></g><g transform="translate(37.5,563)" ><path d="M0,-2 l-6,4 M0,-2 l6,4 M0,-2 v-7" fill="none" stroke="#111" stroke-width="1.2" /><circle cx="0" cy="-2" r="2" fill="#fff" stroke="#111" stroke-width="1" /><rect x="-8" y="1" width="3" height="3" fill="#2a9a3a" stroke="none" stroke-width="1" rx="0" /><rect x="5" y="1" width="3" height="3" fill="#d03030" stroke="none" stroke-width="1" rx="0" /><path d="M-5,5 l5,3 l5,-3" fill="none" stroke="#555" stroke-width="0.8" /></g><g transform="translate(37.5,585)" ><circle cx="0" cy="0" r="7.5" fill="none" stroke="#2a9a3a" stroke-width="1.3" /><ellipse cx="0" cy="0" rx="7.5" ry="3" fill="none" stroke="#d03030" stroke-width="1.3" /><ellipse cx="0" cy="0" rx="3" ry="7.5" fill="none" stroke="#2a4ac8" stroke-width="1.3" /><rect x="-1.5" y="-1.5" width="3" height="3" fill="#d03030" stroke="none" stroke-width="1" rx="0" /></g><g transform="translate(37.5,607.5)" ><path d="M-8,-4 l6,-3 v11 l-6,3z" fill="#d8d8d8" stroke="#777" stroke-width="1" /><text x="-6" y="3" font-size="8" fill="#111" font-weight="normal" font-family="Liberation Sans, sans-serif" >0</text><path d="M3,-6 q3,0 3,3" fill="none" stroke="#111" stroke-width="1" /><circle cx="5" cy="4" r="2" fill="none" stroke="#111" stroke-width="1.2" /></g><g transform="translate(63.5,149.5)" ><circle cx="0" cy="0" r="5" fill="url(#gSph)" stroke="none" stroke-width="1" /><ellipse cx="0" cy="0" rx="8" ry="3" fill="none" stroke="#3a5a9a" stroke-width="1.4" /><path d="M0,-9 v18" fill="none" stroke="#3a5a9a" stroke-width="1.2" /><path d="M0,-9 l-2.5,3 h5z M0,9 l-2.5,-3 h5z" fill="#3a5a9a" stroke="none" stroke-width="1" /></g><g transform="translate(63.5,171)" ><circle cx="-1" cy="1" r="5.5" fill="url(#gGray)" stroke="#8a92a0" stroke-width="0.6" /><path d="M-8,6 q8,-2 14,-12" fill="none" stroke="#dfe6f2" stroke-width="2.4" /><path d="M-8,6 q8,-2 14,-12" fill="none" stroke="#4a6aa8" stroke-width="0.8" /><circle cx="4.5" cy="-3.5" r="2.2" fill="#2d7ae0" stroke="none" stroke-width="1" /></g><g transform="translate(63.5,193)" ><circle cx="2" cy="-2" r="5" fill="#3aa84a" stroke="none" stroke-width="1" /><circle cx="5" cy="-5" r="3" fill="#e8d83a" stroke="none" stroke-width="1" /><path d="M-8,7 l7,-7 M-1,0 h-5 M-1,0 v5" fill="none" stroke="#1d3c78" stroke-width="2" /><path d="M-4,-4 q4,-2 7,2" fill="none" stroke="#2a6a3a" stroke-width="1" /></g><g transform="translate(63.5,233)" ><path d="M-4,-8 h7 l4,4 v8 h-11z" fill="#e8f0fa" stroke="#2c5aa0" stroke-width="1" /><rect x="-1" y="-1" width="9" height="9" fill="#cfe0f4" stroke="#2c5aa0" stroke-width="1.2" rx="0" /><rect x="-1" y="-1" width="9" height="2.5" fill="#4a7fd0" stroke="none" stroke-width="1" rx="0" /><line x1="-8" y1="6" x2="-2" y2="-1" stroke="#a0692a" stroke-width="2" /><rect x="1" y="3.5" width="5" height="1" fill="#7ba3d4" stroke="none" stroke-width="1" rx="0" /></g><g transform="translate(63.5,261)" ><path d="M-8,-3 l5,-5 h11 v11 l-5,5 h-11z" fill="url(#gPage)" stroke="none" stroke-width="1" /><path d="M-3,-8 h11 v11 h-11z" fill="none" stroke="#7f9fd0" stroke-width="0.8" /><path d="M-8,8 l5,-5" fill="none" stroke="#7f9fd0" stroke-width="0.8" /><path d="M-8,-3 l5,-5 h11 l-5,5z" fill="#3a64a8" stroke="#2a4a88" stroke-width="0.8" /><path d="M-8,-3 l5,-5 h11 v11 l-5,5 h-11z M3,-3 l5,-5 M-8,-3 h11 v11" fill="none" stroke="#2a4a88" stroke-width="0.9" /></g><g transform="translate(63.5,283)" ><path d="M-8,-3 l5,-5 h11 v11 l-5,5 h-11z" fill="url(#gPage)" stroke="none" stroke-width="1" /><path d="M-3,-8 h11 v11 h-11z" fill="none" stroke="#7f9fd0" stroke-width="0.8" /><path d="M-8,8 l5,-5" fill="none" stroke="#7f9fd0" stroke-width="0.8" /><path d="M-8,8 l5,-5 h11 l-5,5z" fill="#3a64a8" stroke="#2a4a88" stroke-width="0.8" /><path d="M-8,-3 l5,-5 h11 v11 l-5,5 h-11z M3,-3 l5,-5 M-8,-3 h11 v11" fill="none" stroke="#2a4a88" stroke-width="0.9" /></g><g transform="translate(63.5,304.5)" ><path d="M-8,-3 l5,-5 h11 v11 l-5,5 h-11z" fill="url(#gPage)" stroke="none" stroke-width="1" /><path d="M-3,-8 h11 v11 h-11z" fill="none" stroke="#7f9fd0" stroke-width="0.8" /><path d="M-8,8 l5,-5" fill="none" stroke="#7f9fd0" stroke-width="0.8" /><path d="M-8,-3 l5,-5 v11 l-5,5z" fill="#3a64a8" stroke="#2a4a88" stroke-width="0.8" /><path d="M-8,-3 l5,-5 h11 v11 l-5,5 h-11z M3,-3 l5,-5 M-8,-3 h11 v11" fill="none" stroke="#2a4a88" stroke-width="0.9" /></g><g transform="translate(63.5,326)" ><path d="M-8,-3 l5,-5 h11 v11 l-5,5 h-11z" fill="url(#gPage)" stroke="none" stroke-width="1" /><path d="M-3,-8 h11 v11 h-11z" fill="none" stroke="#7f9fd0" stroke-width="0.8" /><path d="M-8,8 l5,-5" fill="none" stroke="#7f9fd0" stroke-width="0.8" /><path d="M3,-3 l5,-5 v11 l-5,5z" fill="#3a64a8" stroke="#2a4a88" stroke-width="0.8" /><path d="M-8,-3 l5,-5 h11 v11 l-5,5 h-11z M3,-3 l5,-5 M-8,-3 h11 v11" fill="none" stroke="#2a4a88" stroke-width="0.9" /></g><g transform="translate(63.5,348)" ><path d="M-8,-3 l5,-5 h11 v11 l-5,5 h-11z" fill="url(#gPage)" stroke="none" stroke-width="1" /><path d="M-3,-8 h11 v11 h-11z" fill="none" stroke="#7f9fd0" stroke-width="0.8" /><path d="M-8,8 l5,-5" fill="none" stroke="#7f9fd0" stroke-width="0.8" /><path d="M-8,-3 h11 v11 h-11z" fill="#3a64a8" stroke="#2a4a88" stroke-width="0.8" /><path d="M-8,-3 l5,-5 h11 v11 l-5,5 h-11z M3,-3 l5,-5 M-8,-3 h11 v11" fill="none" stroke="#2a4a88" stroke-width="0.9" /></g><g transform="translate(63.5,370)" ><path d="M-8,-3 l5,-5 h11 v11 l-5,5 h-11z" fill="url(#gPage)" stroke="none" stroke-width="1" /><path d="M-3,-8 h11 v11 h-11z" fill="none" stroke="#7f9fd0" stroke-width="0.8" /><path d="M-8,8 l5,-5" fill="none" stroke="#7f9fd0" stroke-width="0.8" /><path d="M-3,-8 h11 v11 h-11z" fill="#3a64a8" stroke="#2a4a88" stroke-width="0.8" /><path d="M-8,-3 l5,-5 h11 v11 l-5,5 h-11z M3,-3 l5,-5 M-8,-3 h11 v11" fill="none" stroke="#2a4a88" stroke-width="0.9" /></g><g transform="translate(63.5,399)" ><path d="M0,-9 l7,4.5 v8 l-7,4.5 l-7,-4.5 v-8z" fill="#eef4fc" stroke="#2a4a88" stroke-width="1.1" /><path d="M-7,-4.5 l7,4.5 l7,-4.5 M0,0 v8.5" fill="none" stroke="#2a4a88" stroke-width="1" /><path d="M-7,-4.5 l7,4.5 v8.5 l-7,-4.5z" fill="#3a64a8" stroke="#2a4a88" stroke-width="0.8" /></g><g transform="translate(63.5,420.5)" ><path d="M0,-9 l7,4.5 v8 l-7,4.5 l-7,-4.5 v-8z" fill="#eef4fc" stroke="#2a4a88" stroke-width="1.1" /><path d="M-7,-4.5 l7,4.5 l7,-4.5 M0,0 v8.5" fill="none" stroke="#2a4a88" stroke-width="1" /><path d="M7,-4.5 l-7,4.5 v8.5 l7,-4.5z" fill="#3a64a8" stroke="#2a4a88" stroke-width="0.8" /></g><g transform="translate(63.5,442.5)" ><path d="M0,-9 l7,4.5 v8 l-7,4.5 l-7,-4.5 v-8z" fill="#eef4fc" stroke="#2a4a88" stroke-width="1.1" /><path d="M-7,-4.5 l7,4.5 l7,-4.5 M0,0 v8.5" fill="none" stroke="#2a4a88" stroke-width="1" /><path d="M0,0 l7,-4.5 v8 l-7,4.5z" fill="#3a64a8" stroke="#2a4a88" stroke-width="0.8" /></g><g transform="translate(63.5,464.5)" ><path d="M0,-9 l7,4.5 v8 l-7,4.5 l-7,-4.5 v-8z" fill="#eef4fc" stroke="#2a4a88" stroke-width="1.1" /><path d="M-7,-4.5 l7,4.5 l7,-4.5 M0,0 v8.5" fill="none" stroke="#2a4a88" stroke-width="1" /><path d="M-7,-4.5 l7,4.5 v8.5 l-7,-4.5z" fill="#3a64a8" stroke="#2a4a88" stroke-width="0.8" /></g><g transform="translate(63.5,493)" ><rect x="-8" y="-3" width="16" height="10" fill="#333" stroke="#111" stroke-width="1" rx="1" /><rect x="-6" y="-6" width="5" height="3" fill="#444" stroke="none" stroke-width="1" rx="0" /><circle cx="1" cy="2" r="3.5" fill="#8ab0e0" stroke="#ddd" stroke-width="1" /><path d="M3,-9 l1,3 l3,-1 l-2,2.5 l2,2 l-3,0 l-1,3 l-1,-3 l-3,0 l2,-2 l-2,-2.5 l3,1z" fill="#fff" stroke="#9cc0f0" stroke-width="0.5" /></g><g transform="translate(63.5,521)" ><circle cx="0" cy="0" r="8" fill="#f4f6f8" stroke="#b8c0c8" stroke-width="1" /><path d="M-5,0 l5,-5 v3 h5 v4 h-5 v3z" fill="#8a9098" stroke="none" stroke-width="1" /></g><g transform="translate(1353,149.5)" ><path d="M-4.5,6 l9.5,-12 l3,2.5 l-9.5,12z" fill="#e8f0fa" stroke="#223" stroke-width="0.9" /><path d="M2.2,-2.6 l2.8,-3.4 l3,2.5 l-2.8,3.4z" fill="#e8c020" stroke="#8a7a10" stroke-width="0.5" /><circle cx="-3.6" cy="6.4" r="2.3" fill="#e0607a" stroke="#7a3040" stroke-width="0.6" /><line x1="-8" y1="8" x2="-5.5" y2="8" stroke="#333" stroke-width="1.2" /><line x1="-1" y1="8" x2="6" y2="8" stroke="#333" stroke-width="1.2" /></g><g transform="translate(1353,171)" ><circle cx="-3" cy="-4" r="3.5" fill="none" stroke="#222" stroke-width="1.6" /><circle cx="3" cy="3" r="3.5" fill="none" stroke="#222" stroke-width="1.6" /><circle cx="-4" cy="3" r="2.2" fill="none" stroke="#888" stroke-width="1" /><path d="M2,-6 q4,0 4,4" fill="none" stroke="#2a6cc8" stroke-width="1.4" /></g><g transform="translate(1353,193)" ><path d="M-2,-7 v13 h-6z" fill="#fff" stroke="#111" stroke-width="1.4" /><path d="M2,-7 v13 h6z" fill="#b4cdea" stroke="#111" stroke-width="1.4" /><line x1="0" y1="-9" x2="0" y2="8" stroke="#2a6cc8" stroke-width="1" stroke-dasharray="2 1.5"/></g><g transform="translate(1353,215)" ><path d="M-8,6 v-4 h4 v-4 q0,-5 5,-5 q5,0 5,5 v4 h-4 v4z" fill="#cfe0f4" stroke="#1d3c78" stroke-width="1.6" /></g><g transform="translate(1353,237)" ><rect x="-8" y="-8" width="6" height="6" fill="#fff" stroke="#1d2c58" stroke-width="1.5" rx="0" /><rect x="-8" y="1.5" width="6" height="6" fill="#fff" stroke="#1d2c58" stroke-width="1.5" rx="0" /><rect x="1.5" y="-8" width="6" height="6" fill="#fff" stroke="#1d2c58" stroke-width="1.5" rx="0" /><rect x="1.5" y="1.5" width="6" height="6" fill="#fff" stroke="#1d2c58" stroke-width="1.5" rx="0" /></g><g transform="translate(1353,259)" ><path d="M0,-9 l3.5,4 h-2.2 v3.7 h3.7 v-2.2 l4,3.5 l-4,3.5 v-2.2 h-3.7 v3.7 h2.2 l-3.5,4 l-3.5,-4 h2.2 v-3.7 h-3.7 v2.2 l-4,-3.5 l4,-3.5 v2.2 h3.7 v-3.7 h-2.2z" fill="#2a5fb4" stroke="none" stroke-width="1" /></g><g transform="translate(1353,281)" ><path d="M-3,-6 a7,7 0 1 0 6,0" fill="none" stroke="#2a5a9a" stroke-width="2" /><path d="M-7,-8 l6,-1 l-2,6z" fill="#2a5a9a" stroke="none" stroke-width="1" /></g><g transform="translate(1353,303)" ><rect x="-8" y="-8" width="15" height="15" fill="#dce8f6" stroke="#2a4a88" stroke-width="1.2" rx="0" /><rect x="-8" y="-1" width="8" height="8" fill="none" stroke="#111" stroke-width="1.2" rx="0" stroke-dasharray="1.5 1.5"/></g><g transform="translate(1353,325)" ><rect x="-8" y="-7" width="6" height="14" fill="#fff" stroke="#111" stroke-width="1.3" rx="0" /><path d="M-2,-7 l9,14 h-9z" fill="#b4cdea" stroke="#111" stroke-width="1.3" /></g><g transform="translate(1353,347)" ><path d="M-8,1 h5 M3,1 h5" fill="none" stroke="#111" stroke-width="1.4" /><path d="M-3,1 h6" fill="none" stroke="#2a6cc8" stroke-width="1" stroke-dasharray="1.5 1"/><line x1="-2" y1="7" x2="4" y2="-7" stroke="#2a5a9a" stroke-width="1.4" /></g><g transform="translate(1353,369)" ><path d="M-8,1 h6" fill="none" stroke="#111" stroke-width="1.4" /><path d="M-2,1 h6" fill="none" stroke="#2a6cc8" stroke-width="1" stroke-dasharray="1.5 1"/><line x1="2" y1="7" x2="8" y2="-7" stroke="#2a5a9a" stroke-width="1.4" /></g><g transform="translate(1353,390.5)" ><rect x="-7" y="-6" width="14" height="13" fill="url(#gPage)" stroke="#2a4a88" stroke-width="1.3" rx="0" /><rect x="-2" y="-7" width="4" height="2" fill="#f0f0f0" stroke="none" stroke-width="1" rx="0" /></g><g transform="translate(1353,412)" ><rect x="-7" y="-6" width="14" height="13" fill="url(#gPage)" stroke="#2a4a88" stroke-width="1.3" rx="0" /><rect x="-3.5" y="-7" width="7" height="2.2" fill="#f0f0f0" stroke="none" stroke-width="1" rx="0" /></g><g transform="translate(1353,435)" ><path d="M-8,0 h16" fill="none" stroke="#111" stroke-width="1.5" /><path d="M-1,0 l-4,-3 v6z M1,0 l4,-3 v6z" fill="#1d2c58" stroke="none" stroke-width="1" /></g><g transform="translate(1353,457)" ><path d="M-7,8 v-8 l8,-8 h7" fill="none" stroke="#111" stroke-width="1.4" /><path d="M-7,0 v-8 h8" fill="none" stroke="#111" stroke-width="0.8" stroke-dasharray="1 1"/><line x1="-6" y1="-1" x2="0" y2="-7" stroke="#2a7ae0" stroke-width="1.6" /></g><g transform="translate(1353,479)" ><path d="M-7,8 v-6 q0,-10 10,-10 h5" fill="none" stroke="#111" stroke-width="1.4" /><path d="M-7,2 v-10 h10" fill="none" stroke="#111" stroke-width="0.8" stroke-dasharray="1 1"/><path d="M-6.5,1 q1,-8 9,-8.5" fill="none" stroke="#2a7ae0" stroke-width="1.6" /></g><g transform="translate(1353,501)" ><path d="M-6,0 l3,-5 l5,2 l1,6 l-5,3z" fill="#e03020" stroke="#8a2010" stroke-width="0.6" /><path d="M-3,-1 l3,-2 l2,4 l-3,2z" fill="#f6d040" stroke="none" stroke-width="1" /><path d="M2,-3 l6,-5" fill="none" stroke="#555" stroke-width="1.4" /><path d="M8,-9 l1,2 M6,-9 l-1,2 M9,-6 l-2,0" fill="none" stroke="#888" stroke-width="0.8" /><circle cx="-6" cy="5" r="1.5" fill="#e03020" stroke="none" stroke-width="1" /><circle cx="2" cy="6" r="1.3" fill="#f6a030" stroke="none" stroke-width="1" /></g><g transform="translate(1353,540.5)" ><rect x="-8" y="-8" width="10" height="10" fill="#dce8f6" stroke="#4a6ea8" stroke-width="1" rx="0" /><rect x="-3" y="-3" width="10" height="10" fill="#4a74b4" stroke="#4a6ea8" stroke-width="1" rx="0" /><rect x="2" y="2" width="6" height="6" fill="#eef4fc" stroke="#7a9ac8" stroke-width="0.8" rx="0" /></g><g transform="translate(1353,563)" ><rect x="-8" y="-8" width="10" height="10" fill="#4a74b4" stroke="#4a6ea8" stroke-width="1" rx="0" /><rect x="-3" y="-3" width="10" height="10" fill="#dce8f6" stroke="#4a6ea8" stroke-width="1" rx="0" /><rect x="2" y="2" width="6" height="6" fill="#eef4fc" stroke="#7a9ac8" stroke-width="0.8" rx="0" /></g><g transform="translate(1353,585)" ><rect x="-7" y="-7" width="12" height="12" fill="#4a74b4" stroke="#3a5a98" stroke-width="1" rx="0" /><rect x="-2" y="-1" width="9" height="8" fill="#dce8f6" stroke="#7a9ac8" stroke-width="1" rx="0" /></g><g transform="translate(1353,607)" ><rect x="-7" y="-7" width="12" height="12" fill="#4a74b4" stroke="#3a5a98" stroke-width="1" rx="0" /><rect x="-2" y="-1" width="9" height="8" fill="#dce8f6" stroke="#7a9ac8" stroke-width="1" rx="0" /></g><rect x="3" y="4" width="14" height="14" fill="#1a9080" stroke="none" stroke-width="1" rx="0" /><path d="M4.5,16 l3.5,-10 h2 l2,6 M5.5,12.5 h6" fill="none" stroke="#fff" stroke-width="1.6" /><path d="M13.5,4 v14 M3,13.5 h14" fill="none" stroke="#cfeee8" stroke-width="1" /><rect x="11.5" y="11.5" width="4" height="4" fill="#1a9080" stroke="#fff" stroke-width="1" rx="0" /><rect x="1274" y="10.5" width="8" height="2" fill="#111" stroke="none" stroke-width="1" rx="0" /><rect x="1300" y="7" width="7" height="6.5" fill="none" stroke="#111" stroke-width="1.2" rx="0" /><path d="M1302,7 v-2 h7 v6.5 h-2" fill="none" stroke="#111" stroke-width="1.2" /><path d="M1337,5 l8,8 M1345,5 l-8,8" fill="none" stroke="#fff" stroke-width="1.8" /><rect x="1314" y="35" width="6" height="1.8" fill="#555" stroke="none" stroke-width="1" rx="0" /><rect x="1333" y="31.5" width="5" height="4" fill="none" stroke="#555" stroke-width="1.4" rx="0" /><path d="M1335.5,31 v-2 h5 v4.5 h-2" fill="none" stroke="#555" stroke-width="1.4" /><path d="M1352.5,29.5 l6,6 M1358.5,29.5 l-6,6" fill="none" stroke="#555" stroke-width="1.8" /><path d="M9,31 l9,-5 l5,8 v5 h-14z" fill="#f2d23a" stroke="#b8981a" stroke-width="0.6" /><path d="M9,31 l12,3.5 l2,4.5 h-14z" fill="#e8c020" stroke="none" stroke-width="1" /><path d="M10,25 h7 l5,6 l-12,-1z" fill="#2a4a8a" stroke="none" stroke-width="1" /><path d="M12,25.5 l1,2 l2,-0.5 l-1.5,1.5 l1,2 l-2,-1 l-1.5,1.5 l0.3,-2.2 l-2,-1 l2.2,-0.3z" fill="#fff" stroke="none" stroke-width="1" /><path d="M84,630.5 v8" fill="none" stroke="#111" stroke-width="1.5" /><path d="M91,630.5 v8 l-5.5,-4z" fill="#111" stroke="none" stroke-width="1" /><path d="M108,630.5 v8 l-5.5,-4z" fill="#111" stroke="none" stroke-width="1" /><path d="M122,630.5 v8 l5.5,-4z" fill="#111" stroke="none" stroke-width="1" /><path d="M146,630.5 v8" fill="none" stroke="#111" stroke-width="1.5" /><path d="M139,630.5 v8 l5.5,-4z" fill="#111" stroke="none" stroke-width="1" /><path d="M156,627 h43 l-3,15 h-36z" fill="#000" stroke="#000" stroke-width="1" /><path d="M199.5,627 h50.5 l-3.5,14.5 h-45z" fill="#fff" stroke="#000" stroke-width="1" /><text x="163.5" y="638" font-size="12" fill="#fff" font-weight="normal" font-family="Liberation Sans, sans-serif" textLength="28" lengthAdjust="spacingAndGlyphs">Model</text><text x="204" y="638" font-size="12" fill="#000" font-weight="normal" font-family="Liberation Sans, sans-serif" textLength="36.5" lengthAdjust="spacingAndGlyphs">Layout1</text><path d="M8.5,658 v40 M11.5,658 v40" fill="none" stroke="#a0a0a0" stroke-width="1" /><path d="M7.5,658 v40 M10.5,658 v40" fill="none" stroke="#fff" stroke-width="1" /><path d="M1346,670 l3.5,-3.5 l3.5,3.5 M1346,677 l3.5,3.5 l3.5,-3.5" fill="none" stroke="#444" stroke-width="1.5" /><path d="M1285.5,688.5 l-3.5,3.5 l3.5,3.5 M1330,688.5 l3.5,3.5 l-3.5,3.5" fill="none" stroke="#444" stroke-width="1.5" /><rect x="1291" y="685" width="16.5" height="16" fill="#cdcdcd" stroke="none" stroke-width="1" rx="0" /><rect x="1260.5" y="709.5" width="63" height="18" fill="#f4f4f4" stroke="#b0b0b0" stroke-width="1" rx="0" /><path d="M1266,712 q6,-3 8,2 q-1,6 -7,7" fill="none" stroke="#3a5aa8" stroke-width="1.6" /><path d="M1271,722 l5,-9 l5,9z" fill="#f6e030" stroke="#8a7a10" stroke-width="0.8" /><rect x="1275.4" y="716" width="1.3" height="3.2" fill="#111" stroke="none" stroke-width="1" rx="0" /><rect x="1275.4" y="720" width="1.3" height="1.2" fill="#111" stroke="none" stroke-width="1" rx="0" /><path d="M1293,715 v-2 q0,-3 3,-3 q3,0 3,3" fill="none" stroke="#b8960a" stroke-width="2" /><rect x="1284.5" y="715" width="10" height="9.5" fill="#d8b820" stroke="#7a6408" stroke-width="1" rx="1" /><path d="M1285,718 h9 M1285,721 h9" fill="none" stroke="#7a6408" stroke-width="0.8" /><rect x="1304" y="711" width="11" height="13" fill="#2a5a9a" stroke="none" stroke-width="1" rx="0" /><path d="M1309.5,712.5 v10 M1306,716 h7" fill="none" stroke="#fff" stroke-width="1.4" /><circle cx="1315.5" cy="722" r="4.2" fill="#28a838" stroke="#fff" stroke-width="0.8" /><path d="M1313.3,722 l1.6,1.8 l2.8,-3.4" fill="none" stroke="#fff" stroke-width="1.3" /><path d="M1329.5,720 h8 l-4,4.2z" fill="#111" stroke="none" stroke-width="1" /><rect x="1346.5" y="710" width="15" height="14.5" fill="url(#gPage)" stroke="#2a4a88" stroke-width="1.6" rx="0" /></svg>
<div id="taskbar"><div class="abs" style="left:176px;top:1px;width:57px;height:38px;background:#b9b9b9;border:1px solid #d8d8d8;box-sizing:border-box"></div><div class="abs" style="left:486px;top:1px;width:58px;height:38px;background:#a2a2a2;border:1px solid #bdbdbd;box-sizing:border-box"></div><svg class="abs" style="left:0;top:0" width="1366" height="40" viewBox="0 728 1366 40"><defs><linearGradient id="tIE" x1="0" y1="0" x2="0" y2="1"><stop offset="0" stop-color="#5cc4f4"/><stop offset="1" stop-color="#1a7fd0"/></linearGradient><linearGradient id="tAC" x1="0" y1="0" x2="1" y2="1"><stop offset="0" stop-color="#2aa090"/><stop offset="1" stop-color="#147868"/></linearGradient><radialGradient id="tUT" cx="0.4" cy="0.3" r="0.8"><stop offset="0" stop-color="#8fd05a"/><stop offset="1" stop-color="#3f9a2a"/></radialGradient></defs><g fill="#fff"><path d="M12,738.2 l11.5,-1.7 v10.6 h-11.5z"/><path d="M24.7,736.3 l13.5,-2 v12.8 h-13.5z"/><path d="M12,748.3 h11.5 v10.6 l-11.5,-1.7z"/><path d="M24.7,748.3 h13.5 v12.8 l-13.5,-2z"/></g><g transform="translate(81.5,747.5) scale(1.17)"><circle r="11.5" fill="url(#tIE)"/><path d="M-7,1.5 h14 q0.5,-9 -7,-9 q-7.5,0 -7.5,8 q0,8 7.5,8 q5,0 6.8,-4 h-4 q-1,1.2 -2.8,1.2 q-3,0 -3,-4.2z M-3,-1.5 q0.3,-3 3,-3 q2.8,0 3,3z" fill="#fff" fill-rule="evenodd"/><ellipse rx="15" ry="6" transform="rotate(-32)" fill="none" stroke="#f4c430" stroke-width="2.4"/></g><g><path d="M127,740 h9 l2,-3 h18 v6 h-29z" fill="#e8b84a"/><rect x="127" y="741" width="31" height="19" fill="#f6d674" stroke="#d4a030" stroke-width="0.8"/><rect x="130" y="737" width="3" height="2" fill="#3aa04a"/><rect x="135" y="737" width="3" height="2" fill="#d84a3a"/><rect x="148" y="739" width="4" height="2" fill="#3a8ad8"/><path d="M131,762 v-9 q0,-3 3,-3 h17 q3,0 3,3 v9 h-6 v-6 h-11 v6z" fill="#6fb4e4" stroke="#3a84c0" stroke-width="0.8"/></g><g><rect x="189" y="732.5" width="31" height="31" fill="url(#tAC)"/><path d="M193,760 l8,-24 h5 l3,10" fill="none" stroke="#fff" stroke-width="3.2"/><path d="M196,752 h12" stroke="#fff" stroke-width="2"/><path d="M213,733 v30 M190,752.5 h30" stroke="#fff" stroke-width="1.4"/><rect x="209.5" y="749" width="7" height="7" fill="#2aa090" stroke="#fff" stroke-width="1.4"/></g><g><rect x="251" y="731.5" width="32" height="32.5" fill="#f1dfdb"/><path d="M256,760 l9,-24 h5 l9,24 h-6.5 l-1.8,-5.5 h-7 l-1.8,5.5z M265.2,750 h4.6 l-2.3,-7.5z" fill="#c8202a" fill-rule="evenodd"/><path d="M256,760 l6,0 l1.8,-5.5 l-3,-1z" fill="#8a1018"/></g><g><rect x="323" y="736" width="20" height="24" fill="#fff" stroke="#2b579a" stroke-width="1"/><path d="M328,740 h13 M328,743.5 h13 M328,747 h13 M328,750.5 h13 M328,754 h13" stroke="#2b579a" stroke-width="1.2"/><path d="M313,735.5 l18,-3.5 v32 l-18,-3.5z" fill="#2b579a"/><text x="315.2" y="753.5" font-size="13" font-weight="bold" fill="#fff" font-family="Liberation Sans, sans-serif">W</text></g><g><rect x="386" y="736" width="20" height="24" fill="#fff" stroke="#217346" stroke-width="1"/><path d="M391,740 h13 M391,743.5 h13 M391,747 h13 M391,750.5 h13 M391,754 h13 M397,738 v20" stroke="#217346" stroke-width="1.2"/><path d="M376,735.5 l18,-3.5 v32 l-18,-3.5z" fill="#217346"/><text x="380.3" y="753.5" font-size="14" font-weight="bold" fill="#fff" font-family="Liberation Sans, sans-serif">X</text></g><g><rect x="448" y="736" width="21" height="24" fill="#fff" stroke="#d24726" stroke-width="1"/><circle cx="461" cy="744" r="4.5" fill="#d24726"/><path d="M461,744 v-4.5 a4.5,4.5 0 0 1 4.5,4.5z" fill="#fff"/><path d="M455,752 h12 M455,755.5 h12" stroke="#d24726" stroke-width="1.3"/><path d="M438,735.5 l18,-3.5 v32 l-18,-3.5z" fill="#d24726"/><text x="442" y="753.5" font-size="14" font-weight="bold" fill="#fff" font-family="Liberation Sans, sans-serif">P</text></g><g transform="translate(515,748)"><circle r="14.5" fill="#db4437"/><path d="M0,0 L-12.56,-7.25 A14.5,14.5 0 0 0 0,14.5 Z" fill="#0f9d58"/><path d="M0,0 L0,14.5 A14.5,14.5 0 0 0 12.56,-7.25 Z" fill="#ffcd40"/><path d="M0,0 L12.56,-7.25 A14.5,14.5 0 0 0 -12.56,-7.25 Z" fill="#db4437"/><path d="M0,14.5 L6,3 L12.56,-7.25 A14.5,14.5 0 0 1 0,14.5" fill="#ffcd40"/><circle r="6.6" fill="#fff"/><circle r="5.2" fill="#4285f4"/></g><g transform="translate(577,748)"><circle r="15.5" fill="url(#tUT)"/><g transform="scale(1.15)"><path d="M-7,-8 v9 q0,5 5,5 q3,0 4.5,-2.5 q0.5,2.5 3.5,2.5 h2 v-3.4 h-1.2 q-1,0 -1,-1.2 v-9.4 h-4 v8.5 q0,2.6 -2.8,2.6 q-2,0 -2,-2.4 v-8.7z" fill="#fff"/><path d="M-7,0 v13 l4,-1 v-8z" fill="#fff"/></g></g><g><rect x="628" y="734" width="21" height="28" rx="1.5" fill="#dfeaf6" stroke="#6a9ad0" stroke-width="1.2"/><rect x="630.5" y="736.5" width="16" height="7" fill="#9cc4ee" stroke="#5a8ac8" stroke-width="0.8"/><text x="640" y="743" font-size="7" fill="#1a3a6a" font-family="Liberation Sans, sans-serif">0</text><rect x="630.5" y="746" width="3" height="2.6" fill="#6a9ad0"/><rect x="630.5" y="750" width="3" height="2.6" fill="#6a9ad0"/><rect x="630.5" y="754" width="3" height="2.6" fill="#6a9ad0"/><rect x="630.5" y="758" width="3" height="2.6" fill="#e8a030"/><rect x="634.8" y="746" width="3" height="2.6" fill="#6a9ad0"/><rect x="634.8" y="750" width="3" height="2.6" fill="#6a9ad0"/><rect x="634.8" y="754" width="3" height="2.6" fill="#6a9ad0"/><rect x="634.8" y="758" width="3" height="2.6" fill="#e8a030"/><rect x="639.1" y="746" width="3" height="2.6" fill="#6a9ad0"/><rect x="639.1" y="750" width="3" height="2.6" fill="#6a9ad0"/><rect x="639.1" y="754" width="3" height="2.6" fill="#6a9ad0"/><rect x="639.1" y="758" width="3" height="2.6" fill="#e8a030"/><rect x="643.4" y="746" width="3" height="2.6" fill="#6a9ad0"/><rect x="643.4" y="750" width="3" height="2.6" fill="#6a9ad0"/><rect x="643.4" y="754" width="3" height="2.6" fill="#6a9ad0"/><rect x="643.4" y="758" width="3" height="2.6" fill="#e8a030"/></g><g transform="translate(701,748)"><ellipse cx="-3" cy="-4" rx="11" ry="8.5" fill="#f4f4f4" stroke="#d83a3a" stroke-width="2"/><path d="M-7,-10 l11,18 M5,-10 l-8,14" stroke="#9aa4b0" stroke-width="2.2"/><circle cx="6" cy="11" r="3.6" fill="none" stroke="#2a7ad0" stroke-width="2.4"/><circle cx="-4" cy="9" r="3.6" fill="none" stroke="#2a7ad0" stroke-width="2.4"/></g><g><rect x="749" y="732.5" width="27" height="27" fill="#0a1a3a" stroke="#3ab4e8" stroke-width="1.6"/><text x="752.5" y="753" font-size="17" font-weight="bold" fill="#6ac4f4" font-family="Liberation Sans, sans-serif" letter-spacing="-0.5">Ps</text></g><path d="M1192.5,751.5 l4,-4.5 l4,4.5z" fill="#fff"/><g fill="none" stroke="#fff" stroke-width="1.3"><rect x="1219.5" y="743.5" width="9.5" height="12.5" rx="1"/><path d="M1222,742.5 h4.5"/></g><rect x="1221.5" y="747" width="5.5" height="7.5" fill="#fff"/><g fill="#fff"><rect x="1237.5" y="752" width="2" height="2.5"/><rect x="1240.7" y="750" width="2.2" height="4.5"/><rect x="1244" y="747.5" width="2.2" height="7"/><rect x="1247.3" y="745" width="2.2" height="9.5"/><rect x="1250.6" y="743" width="2.2" height="11.5"/></g><g><path d="M1264,747 h3 l4,-4 v13 l-4,-4 h-3z" fill="#fff"/><path d="M1273.3,746 q2.2,3.5 0,7" fill="none" stroke="#fff" stroke-width="1.2"/></g></svg><div class="tray" style="left:1290px;top:5.5px;width:62px;font-size:11.6px;letter-spacing:-0.25px;line-height:14px">9:58 PM</div><div class="tray" style="left:1290px;top:23px;width:62px;font-size:11.6px;letter-spacing:-0.1px;line-height:14px">28/04/2017</div></div>
</body></html>
